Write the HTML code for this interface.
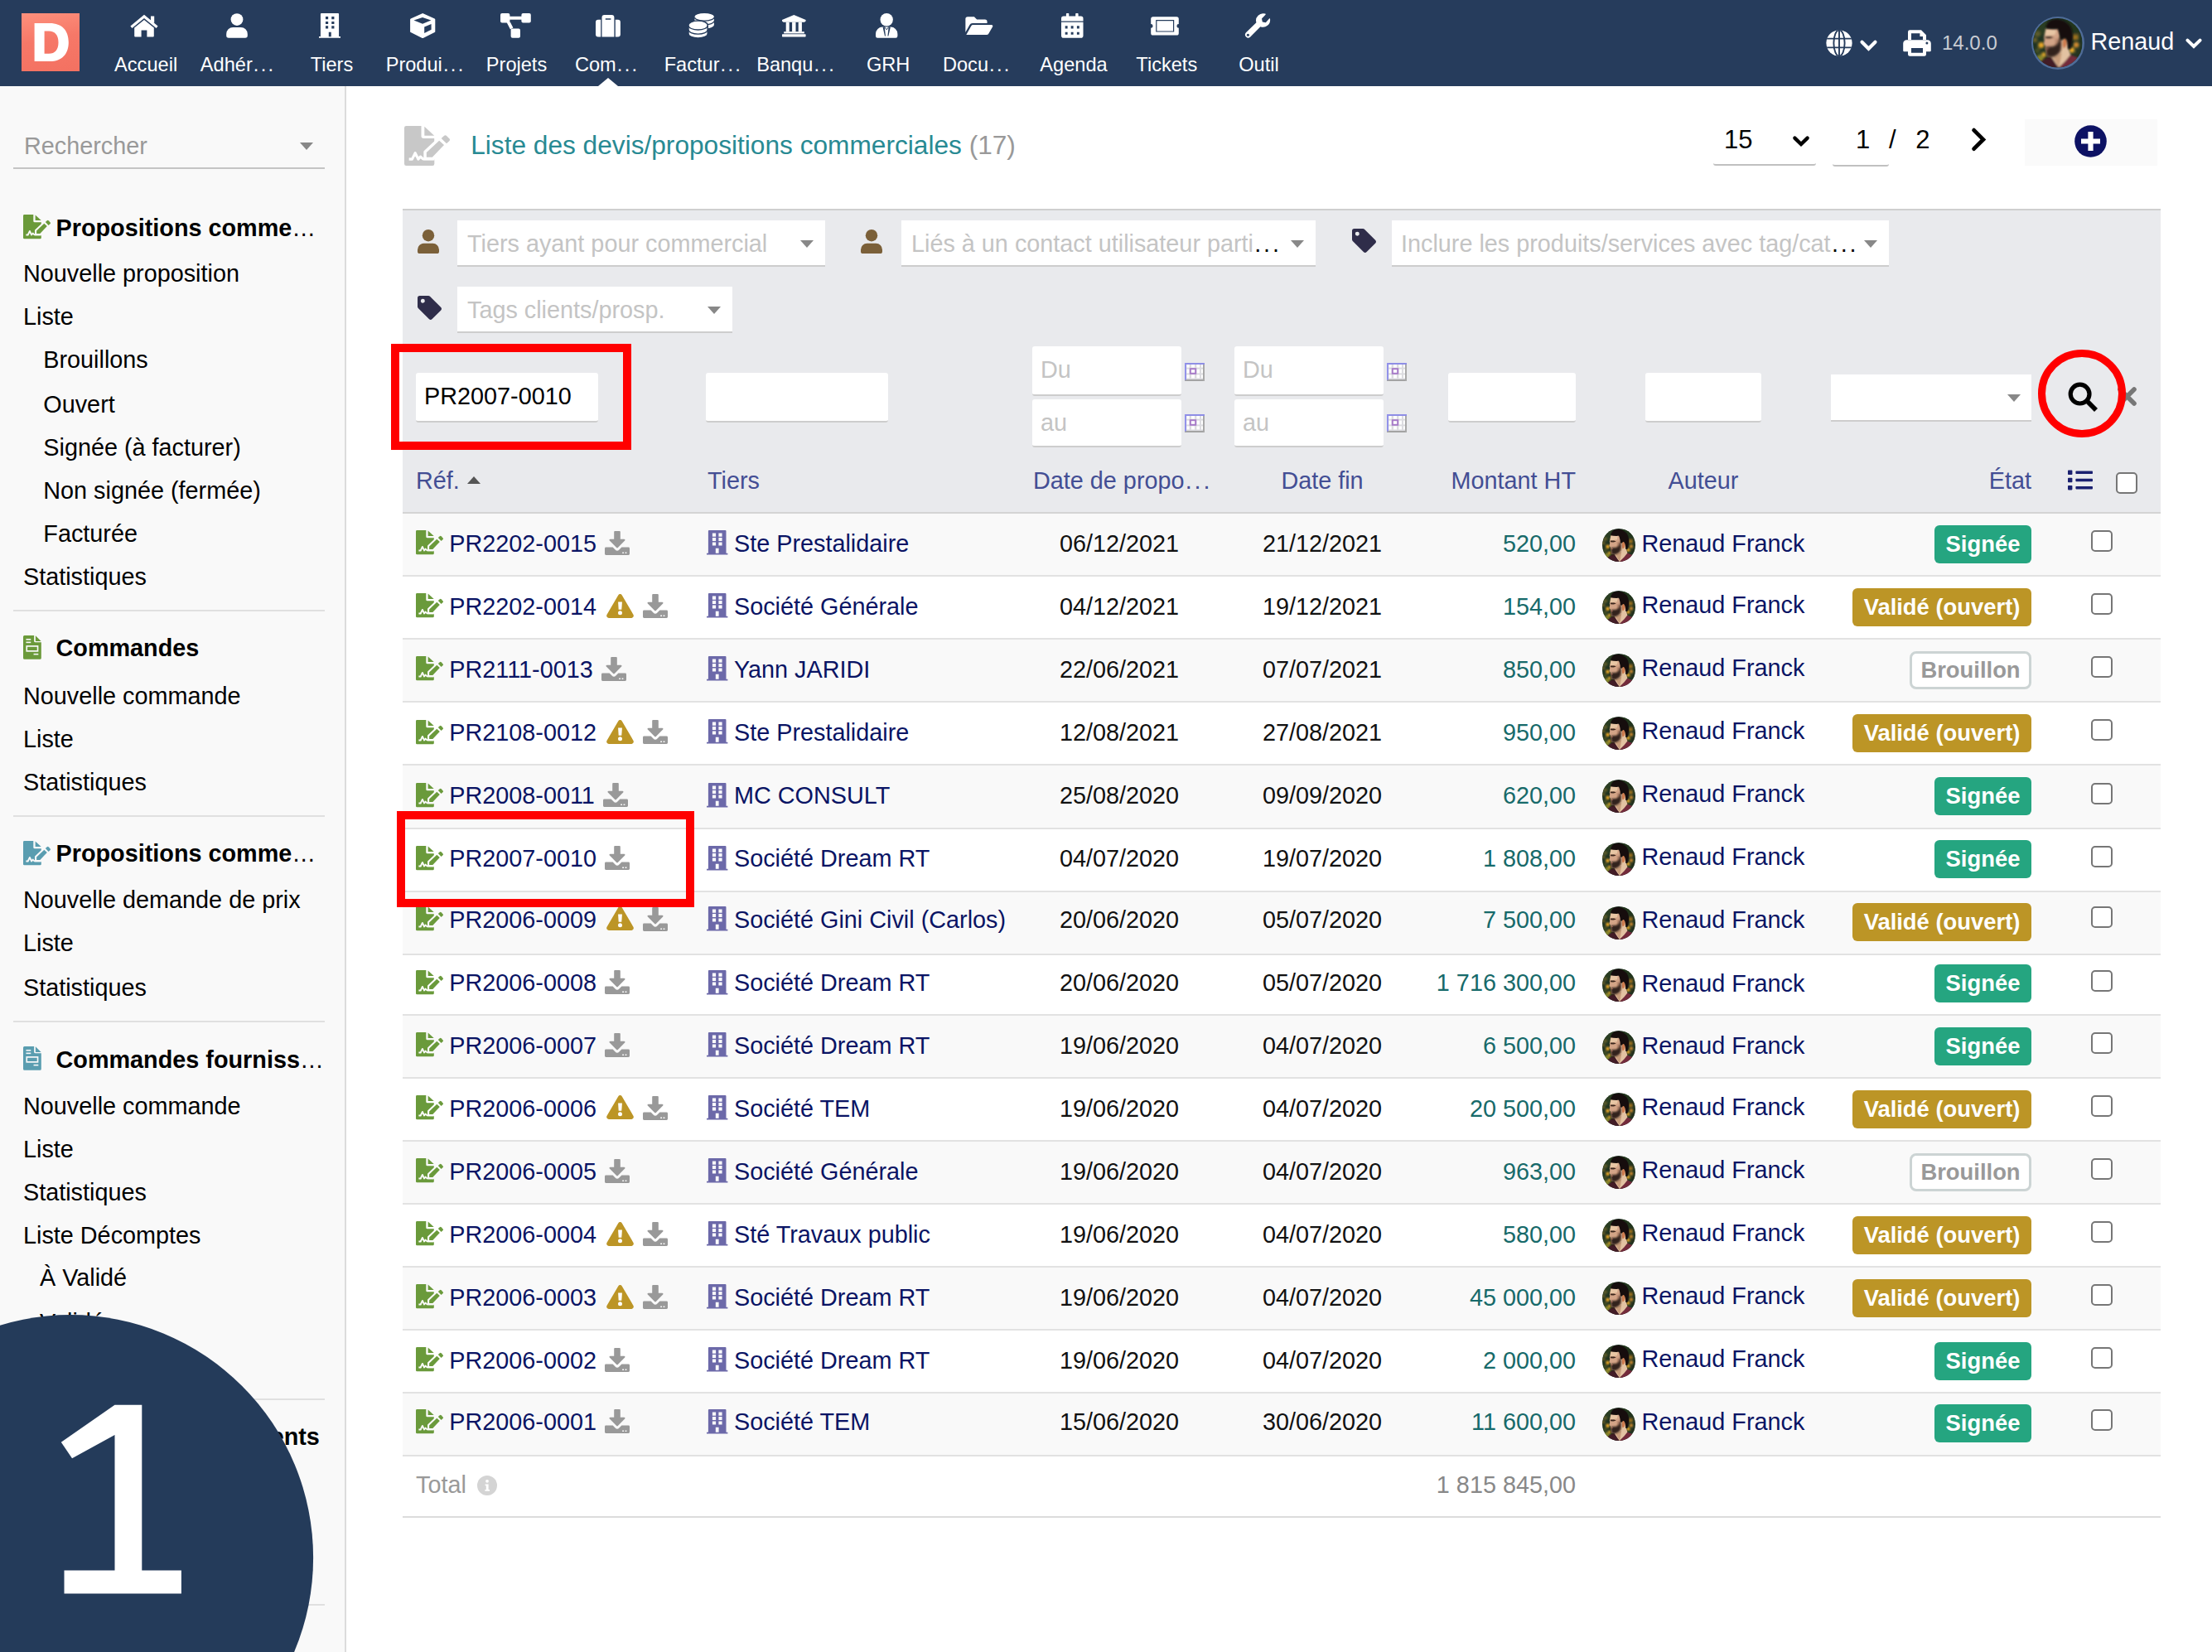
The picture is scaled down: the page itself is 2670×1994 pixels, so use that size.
<!DOCTYPE html>
<html><head><meta charset="utf-8"><title>Liste des devis</title><style>
*{box-sizing:border-box;margin:0;padding:0}
html,body{width:2670px;height:1994px;overflow:hidden;background:#fff}
body{font-family:"Liberation Sans",sans-serif;font-size:28.8px;color:#000;position:relative}
.abs{position:absolute}
svg{display:block;overflow:visible}
#top{position:absolute;left:0;top:0;width:2670px;height:104px;background:#263c5c}
#logo{position:absolute;left:26px;top:16px;width:70px;height:70px;background:linear-gradient(170deg,#fd907c 0%,#f67868 45%,#f37161 100%)}
.mi{position:absolute;top:0;width:112px;height:104px;color:#fff;font-size:23.6px;text-align:center}
.mi .ic{position:absolute;left:0;width:112px;display:flex;justify-content:center}
.mi .lb{position:absolute;left:-8.5px;width:132px;top:64.3px;line-height:28px;white-space:nowrap}
#side{position:absolute;left:0;top:104px;width:418px;height:1890px;background:#f9f9f9;border-right:2px solid #dcdcdc}
.sl{position:absolute;left:28px;white-space:nowrap;line-height:34px;height:34px}
.sl.b{font-weight:bold;left:67.5px}
.sl.s{left:52.3px}
.shr{position:absolute;left:16px;width:376px;height:2px;background:#e0e0e0}
.tb{position:absolute;background:#fff;border-bottom:2px solid #cdcdcd;border-radius:3px}
.ph{color:#c4c4c4;white-space:nowrap;position:absolute;line-height:34px}
.caret{position:absolute;width:0;height:0;border-left:8px solid transparent;border-right:8px solid transparent;border-top:9px solid #888}
table{border-collapse:collapse;position:absolute;left:486px;top:619px;width:2122px;table-layout:fixed}
td{vertical-align:middle;white-space:nowrap;padding:0;height:100%}
tr{border-bottom:2px solid #e0e0e0}
tr.o{background:#f9f9f9}
.ref{color:#0a1464}
.cell{position:relative;height:100%}
.hd{position:absolute;color:#434e94;white-space:nowrap;line-height:34px}
.badge{display:inline-block;height:46px;line-height:46px;border-radius:6px;font-weight:bold;font-size:27.4px;color:#fff;padding:0 13.6px}
.b4{background:#25a580}.b1{background:#bc9526}.b0{background:#fff;color:#999;border:3.4px solid #ccd4d4;line-height:39.2px;padding:0 10.4px;border-radius:8px}
.cb{display:inline-block;width:26px;height:26px;border:2px solid #767676;border-radius:5px;background:#fff}
</style></head><body>
<svg width="0" height="0" style="position:absolute"><defs><filter id="bl1" x="-20%" y="-20%" width="140%" height="140%"><feGaussianBlur stdDeviation="2.8"/></filter><filter id="bl2" x="-10%" y="-10%" width="120%" height="120%"><feGaussianBlur stdDeviation="1.5"/></filter><filter id="bl3" x="-20%" y="-20%" width="140%" height="140%"><feGaussianBlur stdDeviation="2.4"/></filter><clipPath id="avc"><circle cx="50" cy="50" r="50"/></clipPath><symbol id="avatar" viewBox="0 0 100 100"><g clip-path="url(#avc)"><rect width="100" height="100" fill="#1f3322"/><g filter="url(#bl1)"><rect x="0" y="0" width="32" height="34" fill="#2b3d22"/><rect x="64" y="0" width="40" height="30" fill="#22361f"/><circle cx="9" cy="32" r="6" fill="#5d5c2a"/><circle cx="4" cy="44" r="5" fill="#6a5e25"/><circle cx="16.5" cy="54.5" r="6" fill="#eaa728"/><circle cx="22" cy="74" r="5" fill="#d7a22c"/><circle cx="14" cy="82" r="8" fill="#86852c"/><circle cx="9" cy="66" r="5" fill="#4a5222"/><circle cx="78.5" cy="64.5" r="5.4" fill="#f4ae28"/><circle cx="87.5" cy="54" r="5.6" fill="#cf8a2e"/><rect x="79" y="33" width="13" height="11" fill="#9a6f1f"/><circle cx="93" cy="70" r="6" fill="#26331c"/></g><g filter="url(#bl2)"><path d="M14 89 L31 78.5 L40 78 L52 101 L10 101 Z" fill="#431a26"/><path d="M75 73.5 L90 79.5 L100 86 L100 101 L50 101 L66 85 Z" fill="#732c3b"/><path d="M38 70 L56 42 L71 42 L72 62 L76 74 L66 86 L52 100 L46 92 L37 78 Z" fill="#e3c2a2"/><path d="M40 78 L58 70 L55 88 L52 99 Z" fill="#c79c7a"/><path d="M26 20 L52 19 L56 42 L58 66 L40 78 L28 76 L25.5 62 L24.8 56 L21.3 52.3 L23 44 L22 38.6 Z" fill="#d3a487"/><path d="M26 22 L47 21 L45 33 L24 37 Z" fill="#e8c6a4"/><path d="M44 40 L54 44 L54 56 L44 58 Z" fill="#c08f74"/><path d="M24.5 36.5 L36 36.5 L42 39.5 L33 41.5 L25 40.5 Z" fill="#3b261c"/><path d="M60 44 C62 38 69 38 69.5 45 C70 52 67 60 62 61 C59 58 59 50 60 44 Z" fill="#cf7d50"/></g><g filter="url(#bl3)"><path d="M25.5 58.5 C30 57.5 35 58 40 57 C46 56 50 52 52 46 L52.5 39 L56 40 C57 52 57.5 60 55 67 C50.5 74.5 42 79.5 33 78.5 C28 77.5 26.5 74 27 70 C27.5 66 26 62 25.5 58.5 Z" fill="#33221a"/></g><g filter="url(#bl2)"><path d="M25 60.2 L32.5 59.8 L31.6 62.4 L25.6 62.8 Z" fill="#94604f"/><path d="M25.5 20.5 C26.5 11 32 4.5 40 2.5 C52 -0.5 67 4.5 75 15.5 C81 25 82 38 79 50 C78 56 77 60 75.5 62.5 L70.5 62 C70.5 54 70 46 66 41 C63 39 60 41 58.5 45 L55 43 C54.5 36 53 28 50 22 C42 23 33 22 25.5 20.5 Z" fill="#15100e"/></g></g></symbol></defs></svg>
<div id="top">
<div id="logo"><svg width="70" height="70" viewBox="0 0 70 70"><path fill="#fff" fill-rule="evenodd" d="M15.6 12 H34 C49 12 56.8 21 56.8 35 C56.8 49 49 58.1 34 58.1 H15.6 Z M27.6 21.6 V48.8 H33 C40.5 48.8 44.5 43.6 44.5 35.2 C44.5 26.8 40.5 21.6 33 21.6 Z"/></svg></div>
<div class="mi" style="left:118px"><div class="ic" style="top:17px;margin-left:0px"><svg width="34" height="28" viewBox="0 0 34 28" preserveAspectRatio="none" style=""><path fill="#fff" d="M17 0.8 L33.6 14.6 L31.6 17 L17 4.9 L2.4 17 L0.4 14.6 Z"/><rect fill="#fff" x="25" y="2.5" width="4.2" height="8"/><path fill="#fff" d="M5.2 16.6 L17 6.9 L28.8 16.6 V26.4 a1 1 0 0 1 -1 1 H20.4 V19.6 H13.6 V27.4 H6.2 a1 1 0 0 1 -1 -1 Z"/></svg></div><div class="lb" style="margin-left:0.6px">Accueil</div></div>
<div class="mi" style="left:230px"><div class="ic" style="top:16px;margin-left:0px"><svg width="26" height="30" viewBox="0 0 26 30" preserveAspectRatio="none" style=""><circle fill="#fff" cx="13" cy="7.6" r="7.4"/><path fill="#fff" d="M0.2 27 V25 a8 8 0 0 1 8 -8 H17.8 a8 8 0 0 1 8 8 V27 a2.8 2.8 0 0 1 -2.8 2.8 H3 a2.8 2.8 0 0 1 -2.8 -2.8 Z"/></svg></div><div class="lb" style="margin-left:-0.4px">Adhér<span style="letter-spacing:0.098em;margin-left:0.045em;">...</span></div></div>
<div class="mi" style="left:342px"><div class="ic" style="top:16.2px;margin-left:0px"><svg width="26" height="29.8" viewBox="0 0 25.4 29.4" preserveAspectRatio="none" style=""><path fill="#fff" fill-rule="evenodd" d="M1.9 1 a1 1 0 0 1 1 -1 H22.5 a1 1 0 0 1 1 1 V27.7 H25.4 V29.4 H0 V27.7 H1.9 Z M7.8 4.0 H10.9 V7.1 H7.8 Z M14.9 4.0 H18.0 V7.1 H14.9 Z M7.8 9.8 H10.9 V12.9 H7.8 Z M14.9 9.8 H18.0 V12.9 H14.9 Z M7.8 15.1 H10.9 V18.2 H7.8 Z M14.9 15.1 H18.0 V18.2 H14.9 Z M11.5 22.4 H14.4 V27.8 H11.5 Z "/></svg></div><div class="lb" style="margin-left:1px">Tiers</div></div>
<div class="mi" style="left:454px"><div class="ic" style="top:16px;margin-left:0px"><svg width="30.4" height="30.2" viewBox="0 0 30.4 30.2" preserveAspectRatio="none" style=""><path fill="#fff" stroke="#fff" stroke-width="2.4" stroke-linejoin="round" d="M15.2 1.3 L29.1 7.6 V22 L15.2 28.9 L1.3 22 V7.6 Z"/><path fill="#263c5c" d="M4.5 8.4 L15 5.1 L25.4 8.4 L15.1 12.8 Z"/><path fill="#263c5c" d="M17.2 16.5 L25.6 13.1 V19.7 L17.2 24 Z"/></svg></div><div class="lb" style="margin-left:2.1px">Produi<span style="letter-spacing:0.098em;margin-left:0.045em;">...</span></div></div>
<div class="mi" style="left:566px"><div class="ic" style="top:16.1px;margin-left:0px"><svg width="36.8" height="29.8" viewBox="0 0 36.8 29.8" preserveAspectRatio="none" style=""><rect fill="#fff" x="0" y="0" width="11.4" height="11.6" rx="2"/><rect fill="#fff" x="25.4" y="0" width="11.4" height="11.6" rx="2"/><rect fill="#fff" x="12.6" y="18.4" width="11.4" height="11.4" rx="2"/><rect fill="#fff" x="10" y="3.8" width="17" height="3.9"/><path fill="#fff" d="M7.6 11 L11.8 10.6 L15.4 17.4 L12 19.6 Z"/></svg></div><div class="lb" style="margin-left:0px">Projets</div></div>
<div class="mi" style="left:678px"><div class="ic" style="top:17.8px;margin-left:0px"><svg width="29.9" height="26.4" viewBox="0 0 29.9 26.4" preserveAspectRatio="none" style=""><path fill="#fff" fill-rule="evenodd" d="M7.5 3 a3 3 0 0 1 3 -3 H19.4 a3 3 0 0 1 3 3 V26.4 H7.5 Z M11.8 4.3 V5.7 H18.4 V4.3 Z"/><path fill="#fff" d="M0 8.8 a3 3 0 0 1 3 -3 H6.2 V26.4 H3 a3 3 0 0 1 -3 -3 Z"/><path fill="#fff" d="M23.8 5.8 H26.9 a3 3 0 0 1 3 3 V23.4 a3 3 0 0 1 -3 3 H23.8 Z"/></svg></div><div class="lb" style="margin-left:-2.8px">Com<span style="letter-spacing:0.098em;margin-left:0.045em;">...</span></div></div>
<div class="mi" style="left:790px"><div class="ic" style="top:16px;margin-left:0.3px"><svg width="31" height="30" viewBox="0 0 31 30" preserveAspectRatio="none" style=""><path fill="#fff" d="M7.5 4.2 a11.7 4.2 0 0 1 23.4 0 V14.2 a11.7 4.2 0 0 1 -23.4 0 Z"/><path fill="none" stroke="#263c5c" stroke-width="1.3" d="M7.5 5 a11.7 4.2 0 0 0 23.4 0 M7.5 9.6 a11.7 4.2 0 0 0 23.4 0"/><path fill="#fff" stroke="#263c5c" stroke-width="1.5" d="M0 14.1 a11.6 5.1 0 0 1 23.2 0 V24.9 a11.6 5.1 0 0 1 -23.2 0 Z"/><path fill="none" stroke="#263c5c" stroke-width="1.3" d="M0 14.9 a11.6 5.1 0 0 0 23.2 0 M0 20 a11.6 5.1 0 0 0 23.2 0"/></svg></div><div class="lb" style="margin-left:1.4px">Factur<span style="letter-spacing:0.098em;margin-left:0.045em;">...</span></div></div>
<div class="mi" style="left:902px"><div class="ic" style="top:17.8px;margin-left:0.3px"><svg width="28.6" height="26.4" viewBox="0 0 28.6 26.4" preserveAspectRatio="none" style=""><path fill="#fff" d="M14.3 0 L28.6 6 V7.6 L27 8.7 H1.6 L0 7.6 V6 Z"/><rect fill="#fff" x="4.7" y="8.7" width="4" height="11.6"/><rect fill="#fff" x="12.1" y="8.7" width="4.4" height="11.6"/><rect fill="#fff" x="19.7" y="8.7" width="4.2" height="11.6"/><rect fill="#fff" x="2.2" y="20.2" width="24.6" height="2.2"/><rect fill="#fff" x="0" y="23.2" width="28.6" height="3.2" rx="0.6"/></svg></div><div class="lb" style="margin-left:1.6px">Banqu<span style="letter-spacing:0.098em;margin-left:0.045em;">...</span></div></div>
<div class="mi" style="left:1014px"><div class="ic" style="top:16.2px;margin-left:0.2px"><svg width="26.4" height="29.8" viewBox="0 0 26.4 29.8" preserveAspectRatio="none" style=""><circle fill="#fff" cx="13.2" cy="7.7" r="7.7"/><path fill="#fff" d="M0 27.6 V25 a8.4 8.4 0 0 1 8.4 -8.4 H18 a8.4 8.4 0 0 1 8.4 8.4 V27.6 a2.2 2.2 0 0 1 -2.2 2.2 H2.2 a2.2 2.2 0 0 1 -2.2 -2.2 Z"/><path fill="#263c5c" d="M8.5 16.5 L10.7 16.5 L12 27.6 L11 27.6 Z M17.9 16.5 L15.7 16.5 L14.4 27.6 L15.4 27.6 Z"/><path fill="none" stroke="#263c5c" stroke-width="1" stroke-linejoin="round" d="M10.6 16.6 L13.2 19.8 L15.8 16.6"/></svg></div><div class="lb" style="margin-left:0.6px">GRH</div></div>
<div class="mi" style="left:1126px"><div class="ic" style="top:20px;margin-left:0.3px"><svg width="33.9" height="22.3" viewBox="0 0 36 24" preserveAspectRatio="none" style=""><path fill="#fff" d="M0.4 3 a2.8 2.8 0 0 1 2.8 -2.8 H11.6 L15 3.8 H25.4 a2.8 2.8 0 0 1 2.8 2.8 V8.6 H9.4 a4 4 0 0 0 -3.6 2.2 L0.4 20.4 Z"/><path fill="#fff" d="M7.8 12 a2.6 2.6 0 0 1 2.2 -1.2 H33.8 a1.6 1.6 0 0 1 1.4 2.4 L30 22.4 a2.8 2.8 0 0 1 -2.4 1.4 H1.4 Z"/></svg></div><div class="lb" style="margin-left:-4.2px">Docu<span style="letter-spacing:0.098em;margin-left:0.045em;">...</span></div></div>
<div class="mi" style="left:1238px"><div class="ic" style="top:16.2px;margin-left:0.1px"><svg width="26.5" height="29.8" viewBox="0 0 26.5 29.8" preserveAspectRatio="none" style=""><path fill="#fff" fill-rule="evenodd" d="M0 10.8 H26.5 V27 a2.8 2.8 0 0 1 -2.8 2.8 H2.8 a2.8 2.8 0 0 1 -2.8 -2.8 Z M4.7 15.2 H7.6 V18.4 H4.7 Z M11.7 15.2 H14.6 V18.4 H11.7 Z M18.9 15.2 H21.8 V18.4 H18.9 Z M4.7 22.7 H7.6 V25.8 H4.7 Z M11.7 22.7 H14.6 V25.8 H11.7 Z M18.9 22.7 H21.8 V25.8 H18.9 Z "/><path fill="#fff" d="M0 9.5 V6.4 a2.8 2.8 0 0 1 2.8 -2.8 H23.7 a2.8 2.8 0 0 1 2.8 2.8 V9.5 Z"/><rect fill="#fff" x="5.9" y="0" width="3.4" height="6" rx="0.8"/><rect fill="#fff" x="17.2" y="0" width="3.4" height="6" rx="0.8"/></svg></div><div class="lb" style="margin-left:0.5px">Agenda</div></div>
<div class="mi" style="left:1350px"><div class="ic" style="top:20px;margin-left:0px"><svg width="34" height="23" viewBox="0 0 34 23" preserveAspectRatio="none" style=""><path fill="#fff" fill-rule="evenodd" d="M0.2 2.8 a2.6 2.6 0 0 1 2.6 -2.6 H31.2 a2.6 2.6 0 0 1 2.6 2.6 V9 a2.4 2.4 0 0 0 0 4.8 V20 a2.6 2.6 0 0 1 -2.6 2.6 H2.8 a2.6 2.6 0 0 1 -2.6 -2.6 V13.8 a2.4 2.4 0 0 0 0 -4.8 Z M6.2 4 V18.6 H28.2 V4 Z M7.4 5.2 H27 V17.4 H7.4 Z"/></svg></div><div class="lb" style="margin-left:0.8px">Tickets</div></div>
<div class="mi" style="left:1462px"><div class="ic" style="top:16px;margin-left:0px"><svg width="32" height="31" viewBox="0 0 32 31" preserveAspectRatio="none" style=""><path fill="#fff" d="M31 6.8 a8.6 8.6 0 0 1 -11.6 9.4 L7 28.8 a3.7 3.7 0 0 1 -5.2 -5.2 L14.4 11.2 A8.6 8.6 0 0 1 25.2 0.6 c0.6 0.2 0.7 0.8 0.3 1.2 L21 6.4 L21.8 10.4 L25.8 11.2 L30 6.6 c0.4 -0.4 0.9 -0.3 1 0.2 Z"/><circle fill="#263c5c" cx="4.4" cy="26.2" r="1.5"/></svg></div><div class="lb" style="margin-left:0px">Outil</div></div>
<div class="abs" style="left:722px;top:94px;width:0;height:0;border-left:12px solid transparent;border-right:12px solid transparent;border-bottom:10px solid #fff"></div>
<div class="abs" style="left:2204px;top:36px"><svg width="32" height="32" viewBox="0 0 32 32" preserveAspectRatio="none" style=""><defs><clipPath id="gcl"><circle cx="16" cy="16" r="15.8"/></clipPath></defs><g clip-path="url(#gcl)"><circle fill="#fff" cx="16" cy="16" r="15.8"/><g fill="none" stroke="#263c5c" stroke-width="1.9"><ellipse cx="16" cy="16" rx="6.6" ry="15.8"/><path d="M0 10.6 H32 M0 21.4 H32 M16 0 V32"/></g></g></svg></div>
<div class="abs" style="left:2245px;top:48px"><svg width="21" height="14" viewBox="0 0 20 13" preserveAspectRatio="none" style=""><path fill="none" stroke="#fff" stroke-width="4" stroke-linecap="round" stroke-linejoin="miter" d="M2.4 2.6 L10 10 L17.6 2.6"/></svg></div>
<div class="abs" style="left:2297px;top:36px"><svg width="34" height="32" viewBox="0 0 34 32" preserveAspectRatio="none" style=""><path fill="#fff" fill-rule="evenodd" d="M6 2.4 a2.2 2.2 0 0 1 2.2 -2.2 H22 L28 6.2 V12 H24 V8 H20.4 V4.2 H10 V12 H6 Z"/><path fill="#fff" fill-rule="evenodd" d="M0.2 16.4 a4.2 4.2 0 0 1 4.2 -4.2 H29.6 a4.2 4.2 0 0 1 4.2 4.2 V25 a1.2 1.2 0 0 1 -1.2 1.2 H28 V29.6 a2.2 2.2 0 0 1 -2.2 2.2 H8.2 a2.2 2.2 0 0 1 -2.2 -2.2 V26.2 H1.4 a1.2 1.2 0 0 1 -1.2 -1.2 Z M10 22 V27.8 H24 V22 Z M27.4 16 a1.5 1.5 0 1 0 3 0 a1.5 1.5 0 1 0 -3 0 Z"/></svg></div>
<div class="abs" style="left:2344px;top:37px;font-size:24px;line-height:30px;color:#c9ccd2">14.0.0</div>
<div class="abs" style="left:2452px;top:20px;width:64px;height:64px;border-radius:50%;background:#4f6c98;padding:2.2px"><svg width="59.6" height="59.6" viewBox="0 0 100 100" style="display:block"><use href="#avatar"/></svg></div>
<div class="abs" style="left:2523.5px;top:33.3px;font-size:28.8px;line-height:34px;color:#fff">Renaud</div>
<div class="abs" style="left:2638px;top:46px"><svg width="20" height="13" viewBox="0 0 20 13" preserveAspectRatio="none" style=""><path fill="none" stroke="#fff" stroke-width="4" stroke-linecap="round" stroke-linejoin="miter" d="M2.4 2.6 L10 10 L17.6 2.6"/></svg></div>
</div>
<div id="side">
<div class="abs" style="left:29px;top:55px;color:#999;line-height:34px">Rechercher</div>
<div class="caret" style="left:362px;top:68px"></div>
<div class="abs" style="left:16px;top:98px;width:376px;height:2px;background:#c4c4c4"></div>
<div class="sl b" style="top:153.5px">Propositions comme<span style="font-weight:normal">…</span></div>
<div class="sl" style="top:209.0px">Nouvelle proposition</div>
<div class="sl" style="top:261.3px">Liste</div>
<div class="sl s" style="top:312.6px">Brouillons</div>
<div class="sl s" style="top:366.5px">Ouvert</div>
<div class="sl s" style="top:418.7px">Signée (à facturer)</div>
<div class="sl s" style="top:471.0px">Non signée (fermée)</div>
<div class="sl s" style="top:522.8px">Facturée</div>
<div class="sl" style="top:575.1px">Statistiques</div>
<div class="sl b" style="top:660.9px">Commandes</div>
<div class="sl" style="top:719.0px">Nouvelle commande</div>
<div class="sl" style="top:771.3px">Liste</div>
<div class="sl" style="top:823.2px">Statistiques</div>
<div class="sl b" style="top:908.8px">Propositions comme<span style="font-weight:normal">…</span></div>
<div class="sl" style="top:965.2px">Nouvelle demande de prix</div>
<div class="sl" style="top:1016.9px">Liste</div>
<div class="sl" style="top:1070.8px">Statistiques</div>
<div class="sl b" style="top:1157.7px">Commandes fourniss<span style="font-weight:normal">…</span></div>
<div class="sl" style="top:1213.7px">Nouvelle commande</div>
<div class="sl" style="top:1266.0px">Liste</div>
<div class="sl" style="top:1318.3px">Statistiques</div>
<div class="sl" style="top:1369.5px">Liste Décomptes</div>
<div class="sl" style="left:48px;top:1421.2px">À Validé</div>
<div class="sl" style="left:48px;top:1475.3px">Validé</div>
<div class="sl b" style="top:1613.0px">Contrats/Abonnements</div>
<div class="shr" style="top:632px"></div>
<div class="shr" style="top:880px"></div>
<div class="shr" style="top:1127.5px"></div>
<div class="shr" style="top:1584px"></div>
<div class="shr" style="top:1831.9px"></div>
<div class="abs" style="left:28px;top:154.7px"><svg width="33" height="29.3" viewBox="0 0 33 29.3" preserveAspectRatio="none" style=""><path fill="#6b9a3a" d="M0 1.4 A1.4 1.4 0 0 1 1.4 0 H12.3 V7.7 a1.5 1.5 0 0 0 1.5 1.5 H21.8 V27.9 a1.4 1.4 0 0 1 -1.4 1.4 H1.4 A1.4 1.4 0 0 1 0 27.9 Z"/><path fill="#6b9a3a" d="M14.6 0.4 L21.7 7.1 H14.6 Z"/><path fill="#f9f9f9" stroke="#f9f9f9" stroke-width="4.2" stroke-linejoin="miter" d="M16.1 19.6 L25.3 10.8 L28.8 14.1 L20.3 23.1 H16.1 Z"/><path fill="#f9f9f9" d="M22 9 H34 V24 H22 Z"/><path fill="#6b9a3a" d="M16.1 19.6 L25.3 10.8 L28.8 14.1 L20.3 23.1 H16.1 Z"/><path fill="#6b9a3a" d="M26.8 9.1 L28.9 7.2 a1.2 1.2 0 0 1 1.6 0 L32.7 9.4 a1.2 1.2 0 0 1 0 1.6 L30.6 13 Z"/><path fill="none" stroke="#f9f9f9" stroke-width="1.9" stroke-linejoin="round" stroke-linecap="butt" d="M3.4 24.5 H5.7 L7.9 19.9 L10.1 24.5 L11.7 22.6 L13.6 24.4 H21.9"/></svg></div>
<div class="abs" style="left:28px;top:662.7px"><svg width="22.2" height="28.8" viewBox="0 0 23 29" preserveAspectRatio="none" style=""><path fill="#6b9a3a" d="M0 1.6 A1.6 1.6 0 0 1 1.6 0 H13.6 V6.8 a1.6 1.6 0 0 0 1.6 1.6 H22.6 V27.4 a1.6 1.6 0 0 1 -1.6 1.6 H1.6 A1.6 1.6 0 0 1 0 27.4 Z"/><path fill="#6b9a3a" d="M15.4 0.2 L22.4 7 H15.4 Z"/><g fill="#f9f9f9"><rect x="3.6" y="4" width="6" height="1.6"/><rect x="3.6" y="7.6" width="6" height="1.6"/><rect x="13" y="22" width="6" height="1.6"/></g><rect x="4.4" y="13" width="13.8" height="6" fill="none" stroke="#f9f9f9" stroke-width="1.7"/></svg></div>
<div class="abs" style="left:28px;top:911.0px"><svg width="33" height="29.3" viewBox="0 0 33 29.3" preserveAspectRatio="none" style=""><path fill="#5a9db0" d="M0 1.4 A1.4 1.4 0 0 1 1.4 0 H12.3 V7.7 a1.5 1.5 0 0 0 1.5 1.5 H21.8 V27.9 a1.4 1.4 0 0 1 -1.4 1.4 H1.4 A1.4 1.4 0 0 1 0 27.9 Z"/><path fill="#5a9db0" d="M14.6 0.4 L21.7 7.1 H14.6 Z"/><path fill="#f9f9f9" stroke="#f9f9f9" stroke-width="4.2" stroke-linejoin="miter" d="M16.1 19.6 L25.3 10.8 L28.8 14.1 L20.3 23.1 H16.1 Z"/><path fill="#f9f9f9" d="M22 9 H34 V24 H22 Z"/><path fill="#5a9db0" d="M16.1 19.6 L25.3 10.8 L28.8 14.1 L20.3 23.1 H16.1 Z"/><path fill="#5a9db0" d="M26.8 9.1 L28.9 7.2 a1.2 1.2 0 0 1 1.6 0 L32.7 9.4 a1.2 1.2 0 0 1 0 1.6 L30.6 13 Z"/><path fill="none" stroke="#f9f9f9" stroke-width="1.9" stroke-linejoin="round" stroke-linecap="butt" d="M3.4 24.5 H5.7 L7.9 19.9 L10.1 24.5 L11.7 22.6 L13.6 24.4 H21.9"/></svg></div>
<div class="abs" style="left:28px;top:1159.0px"><svg width="22.2" height="28.8" viewBox="0 0 23 29" preserveAspectRatio="none" style=""><path fill="#5a9db0" d="M0 1.6 A1.6 1.6 0 0 1 1.6 0 H13.6 V6.8 a1.6 1.6 0 0 0 1.6 1.6 H22.6 V27.4 a1.6 1.6 0 0 1 -1.6 1.6 H1.6 A1.6 1.6 0 0 1 0 27.4 Z"/><path fill="#5a9db0" d="M15.4 0.2 L22.4 7 H15.4 Z"/><g fill="#f9f9f9"><rect x="3.6" y="4" width="6" height="1.6"/><rect x="3.6" y="7.6" width="6" height="1.6"/><rect x="13" y="22" width="6" height="1.6"/></g><rect x="4.4" y="13" width="13.8" height="6" fill="none" stroke="#f9f9f9" stroke-width="1.7"/></svg></div>
</div>
<div class="abs" style="left:488px;top:152px"><svg width="55" height="48" viewBox="0 0 33 29.3" preserveAspectRatio="none" style=""><path fill="#c8c8c8" d="M0 1.4 A1.4 1.4 0 0 1 1.4 0 H12.3 V7.7 a1.5 1.5 0 0 0 1.5 1.5 H21.8 V27.9 a1.4 1.4 0 0 1 -1.4 1.4 H1.4 A1.4 1.4 0 0 1 0 27.9 Z"/><path fill="#c8c8c8" d="M14.6 0.4 L21.7 7.1 H14.6 Z"/><path fill="#fff" stroke="#fff" stroke-width="4.2" stroke-linejoin="miter" d="M16.1 19.6 L25.3 10.8 L28.8 14.1 L20.3 23.1 H16.1 Z"/><path fill="#fff" d="M22 9 H34 V24 H22 Z"/><path fill="#c8c8c8" d="M16.1 19.6 L25.3 10.8 L28.8 14.1 L20.3 23.1 H16.1 Z"/><path fill="#c8c8c8" d="M26.8 9.1 L28.9 7.2 a1.2 1.2 0 0 1 1.6 0 L32.7 9.4 a1.2 1.2 0 0 1 0 1.6 L30.6 13 Z"/><path fill="none" stroke="#fff" stroke-width="1.9" stroke-linejoin="round" stroke-linecap="butt" d="M3.4 24.5 H5.7 L7.9 19.9 L10.1 24.5 L11.7 22.6 L13.6 24.4 H21.9"/></svg></div>
<div class="abs" style="left:568.2px;top:152.8px;font-size:31.65px;line-height:44px;color:#288a93;white-space:nowrap">Liste des devis/propositions commerciales <span style="color:#999">(17)</span></div>
<div class="tb" style="left:2068px;top:142px;width:124px;height:58px;border-bottom-color:#c0c0c0"></div>
<div class="abs" style="left:2081px;top:150px;font-size:31px;line-height:38px">15</div>
<div class="abs" style="left:2164px;top:164px"><svg width="20" height="13" viewBox="0 0 20 13" preserveAspectRatio="none" style=""><path fill="none" stroke="#000" stroke-width="4.4" stroke-linecap="round" stroke-linejoin="miter" d="M2.4 2.6 L10 10 L17.6 2.6"/></svg></div>
<div class="tb" style="left:2212px;top:142px;width:68px;height:59.4px;border-bottom-color:#c0c0c0"></div>
<div class="abs" style="left:2240px;top:150px;font-size:31px;line-height:38px">1</div>
<div class="abs" style="left:2280px;top:150px;font-size:31px;line-height:38px">/</div>
<div class="abs" style="left:2312.3px;top:150px;font-size:31px;line-height:38px">2</div>
<svg class="abs" style="left:2378.6px;top:153.6px" width="19.8" height="28.8" viewBox="0 0 22 32"><path d="M4 3.5 L16.5 16 L4 28.5" fill="none" stroke="#000" stroke-width="5.4" stroke-linecap="round" stroke-linejoin="miter"/></svg>
<div class="abs" style="left:2444px;top:144px;width:160px;height:56px;background:#fafafa"></div>
<div class="abs" style="left:2504.2px;top:151.3px"><svg width="39" height="39" viewBox="0 0 39 39" preserveAspectRatio="none" style=""><circle cx="19.5" cy="19.5" r="19.3" fill="#0d1264"/><path fill="#fff" d="M16.4 8 H22.6 V16.4 H31 V22.6 H22.6 V31 H16.4 V22.6 H8 V16.4 H16.4 Z"/></svg></div>
<div class="abs" style="left:486px;top:252px;width:2122px;height:368px;background:#e9eaed;border-top:2px solid #cfcfcf;border-bottom:2px solid #d4d4d4"></div>
<div class="abs" style="left:504px;top:277px"><svg width="26" height="29" viewBox="0 0 26 29" preserveAspectRatio="none" style=""><circle fill="#7b6039" cx="13" cy="7.2" r="7.2"/><path fill="#7b6039" d="M0 26.4 V24.4 a7.6 7.6 0 0 1 7.6 -7.6 H18.4 a7.6 7.6 0 0 1 7.6 7.6 V26.4 a2.6 2.6 0 0 1 -2.6 2.6 H2.6 a2.6 2.6 0 0 1 -2.6 -2.6 Z"/></svg></div>
<div class="tb" style="left:552px;top:266px;width:444px;height:55.5px;border-radius:0"></div><div class="ph" style="left:564px;top:277px">Tiers ayant pour commercial</div><div class="caret" style="left:966px;top:290px"></div>
<div class="abs" style="left:1039px;top:277px"><svg width="26" height="29" viewBox="0 0 26 29" preserveAspectRatio="none" style=""><circle fill="#7b6039" cx="13" cy="7.2" r="7.2"/><path fill="#7b6039" d="M0 26.4 V24.4 a7.6 7.6 0 0 1 7.6 -7.6 H18.4 a7.6 7.6 0 0 1 7.6 7.6 V26.4 a2.6 2.6 0 0 1 -2.6 2.6 H2.6 a2.6 2.6 0 0 1 -2.6 -2.6 Z"/></svg></div>
<div class="tb" style="left:1088px;top:266px;width:500px;height:55.5px;border-radius:0"></div><div class="ph" style="left:1100px;top:277px">Liés à un contact utilisateur parti<span style="letter-spacing:0.098em;margin-left:0.045em;color:#000;">...</span></div><div class="caret" style="left:1558px;top:290px"></div>
<div class="abs" style="left:1632px;top:276px"><svg width="28.8" height="28.8" viewBox="0 0 30 30" preserveAspectRatio="none" style=""><path fill="#2f2d4a" fill-rule="evenodd" d="M0 2.8 A2.8 2.8 0 0 1 2.8 0 H13.6 a2.8 2.8 0 0 1 2 0.8 L29.2 14.4 a2.8 2.8 0 0 1 0 4 L18.4 29.2 a2.8 2.8 0 0 1 -4 0 L0.8 15.6 a2.8 2.8 0 0 1 -0.8 -2 Z M4 6.6 a2.6 2.6 0 1 0 5.2 0 a2.6 2.6 0 1 0 -5.2 0 Z"/></svg></div>
<div class="tb" style="left:1680px;top:266px;width:600px;height:55.5px;border-radius:0"></div><div class="ph" style="left:1691px;top:277px">Inclure les produits/services avec tag/cat<span style="letter-spacing:0.098em;margin-left:0.045em;color:#000;">...</span></div><div class="caret" style="left:2250px;top:290px"></div>
<div class="abs" style="left:504px;top:357px"><svg width="28.8" height="28.8" viewBox="0 0 30 30" preserveAspectRatio="none" style=""><path fill="#2f2d4a" fill-rule="evenodd" d="M0 2.8 A2.8 2.8 0 0 1 2.8 0 H13.6 a2.8 2.8 0 0 1 2 0.8 L29.2 14.4 a2.8 2.8 0 0 1 0 4 L18.4 29.2 a2.8 2.8 0 0 1 -4 0 L0.8 15.6 a2.8 2.8 0 0 1 -0.8 -2 Z M4 6.6 a2.6 2.6 0 1 0 5.2 0 a2.6 2.6 0 1 0 -5.2 0 Z"/></svg></div>
<div class="tb" style="left:552px;top:346px;width:332px;height:55.5px;border-radius:0"></div><div class="ph" style="left:564px;top:357px">Tags clients/prosp.</div><div class="caret" style="left:854px;top:370px"></div>
<div class="tb" style="left:502px;top:450px;width:220px;height:59.8px"></div><div class="abs" style="left:512px;top:460.8px;line-height:34px">PR2007-0010</div>
<div class="tb" style="left:852px;top:450px;width:220px;height:59.8px"></div>
<div class="tb" style="left:1246px;top:418px;width:180px;height:59.8px"></div><div class="ph" style="left:1256px;top:429px">Du</div>
<div class="tb" style="left:1246px;top:482px;width:180px;height:57.8px"></div><div class="ph" style="left:1256px;top:493px">au</div>
<div class="abs" style="left:1430px;top:437.9px"><svg width="24" height="22" viewBox="0 0 24 22" preserveAspectRatio="none" style=""><rect x="0" y="0" width="24" height="22" fill="#dcdce0"/><rect x="2.4" y="2" width="3.2" height="3.6" fill="#fff"/><rect x="8" y="2" width="4.0" height="3.6" fill="#fff"/><rect x="14.4" y="2" width="3.6" height="3.6" fill="#fff"/><rect x="20" y="2" width="2.0" height="3.6" fill="#fff"/><rect x="2.4" y="7.6" width="3.2" height="4.8" fill="#fff"/><rect x="8" y="7.6" width="4.0" height="4.8" fill="#fff"/><rect x="14.4" y="7.6" width="3.6" height="4.8" fill="#fff"/><rect x="20" y="7.6" width="2.0" height="4.8" fill="#fff"/><rect x="2.4" y="14.4" width="3.2" height="4.0" fill="#fff"/><rect x="8" y="14.4" width="4.0" height="4.0" fill="#fff"/><rect x="14.4" y="14.4" width="3.6" height="4.0" fill="#fff"/><rect x="20" y="14.4" width="2.0" height="4.0" fill="#fff"/><rect x="0" y="20" width="24" height="2" fill="#a3a3a3"/><rect x="22" y="0" width="2" height="22" fill="#a9a9a9"/><rect x="0" y="0" width="24" height="2" fill="#8e8ee6"/><rect x="0" y="0" width="2" height="20.6" fill="#9292ea"/><rect x="6.8" y="7.2" width="6.4" height="5.6" fill="#fff" stroke="#a77bc8" stroke-width="2"/></svg></div><div class="abs" style="left:1430px;top:500px"><svg width="24" height="22" viewBox="0 0 24 22" preserveAspectRatio="none" style=""><rect x="0" y="0" width="24" height="22" fill="#dcdce0"/><rect x="2.4" y="2" width="3.2" height="3.6" fill="#fff"/><rect x="8" y="2" width="4.0" height="3.6" fill="#fff"/><rect x="14.4" y="2" width="3.6" height="3.6" fill="#fff"/><rect x="20" y="2" width="2.0" height="3.6" fill="#fff"/><rect x="2.4" y="7.6" width="3.2" height="4.8" fill="#fff"/><rect x="8" y="7.6" width="4.0" height="4.8" fill="#fff"/><rect x="14.4" y="7.6" width="3.6" height="4.8" fill="#fff"/><rect x="20" y="7.6" width="2.0" height="4.8" fill="#fff"/><rect x="2.4" y="14.4" width="3.2" height="4.0" fill="#fff"/><rect x="8" y="14.4" width="4.0" height="4.0" fill="#fff"/><rect x="14.4" y="14.4" width="3.6" height="4.0" fill="#fff"/><rect x="20" y="14.4" width="2.0" height="4.0" fill="#fff"/><rect x="0" y="20" width="24" height="2" fill="#a3a3a3"/><rect x="22" y="0" width="2" height="22" fill="#a9a9a9"/><rect x="0" y="0" width="24" height="2" fill="#8e8ee6"/><rect x="0" y="0" width="2" height="20.6" fill="#9292ea"/><rect x="6.8" y="7.2" width="6.4" height="5.6" fill="#fff" stroke="#a77bc8" stroke-width="2"/></svg></div>
<div class="tb" style="left:1490px;top:418px;width:180px;height:59.8px"></div><div class="ph" style="left:1500px;top:429px">Du</div>
<div class="tb" style="left:1490px;top:482px;width:180px;height:57.8px"></div><div class="ph" style="left:1500px;top:493px">au</div>
<div class="abs" style="left:1674px;top:437.9px"><svg width="24" height="22" viewBox="0 0 24 22" preserveAspectRatio="none" style=""><rect x="0" y="0" width="24" height="22" fill="#dcdce0"/><rect x="2.4" y="2" width="3.2" height="3.6" fill="#fff"/><rect x="8" y="2" width="4.0" height="3.6" fill="#fff"/><rect x="14.4" y="2" width="3.6" height="3.6" fill="#fff"/><rect x="20" y="2" width="2.0" height="3.6" fill="#fff"/><rect x="2.4" y="7.6" width="3.2" height="4.8" fill="#fff"/><rect x="8" y="7.6" width="4.0" height="4.8" fill="#fff"/><rect x="14.4" y="7.6" width="3.6" height="4.8" fill="#fff"/><rect x="20" y="7.6" width="2.0" height="4.8" fill="#fff"/><rect x="2.4" y="14.4" width="3.2" height="4.0" fill="#fff"/><rect x="8" y="14.4" width="4.0" height="4.0" fill="#fff"/><rect x="14.4" y="14.4" width="3.6" height="4.0" fill="#fff"/><rect x="20" y="14.4" width="2.0" height="4.0" fill="#fff"/><rect x="0" y="20" width="24" height="2" fill="#a3a3a3"/><rect x="22" y="0" width="2" height="22" fill="#a9a9a9"/><rect x="0" y="0" width="24" height="2" fill="#8e8ee6"/><rect x="0" y="0" width="2" height="20.6" fill="#9292ea"/><rect x="6.8" y="7.2" width="6.4" height="5.6" fill="#fff" stroke="#a77bc8" stroke-width="2"/></svg></div><div class="abs" style="left:1674px;top:500px"><svg width="24" height="22" viewBox="0 0 24 22" preserveAspectRatio="none" style=""><rect x="0" y="0" width="24" height="22" fill="#dcdce0"/><rect x="2.4" y="2" width="3.2" height="3.6" fill="#fff"/><rect x="8" y="2" width="4.0" height="3.6" fill="#fff"/><rect x="14.4" y="2" width="3.6" height="3.6" fill="#fff"/><rect x="20" y="2" width="2.0" height="3.6" fill="#fff"/><rect x="2.4" y="7.6" width="3.2" height="4.8" fill="#fff"/><rect x="8" y="7.6" width="4.0" height="4.8" fill="#fff"/><rect x="14.4" y="7.6" width="3.6" height="4.8" fill="#fff"/><rect x="20" y="7.6" width="2.0" height="4.8" fill="#fff"/><rect x="2.4" y="14.4" width="3.2" height="4.0" fill="#fff"/><rect x="8" y="14.4" width="4.0" height="4.0" fill="#fff"/><rect x="14.4" y="14.4" width="3.6" height="4.0" fill="#fff"/><rect x="20" y="14.4" width="2.0" height="4.0" fill="#fff"/><rect x="0" y="20" width="24" height="2" fill="#a3a3a3"/><rect x="22" y="0" width="2" height="22" fill="#a9a9a9"/><rect x="0" y="0" width="24" height="2" fill="#8e8ee6"/><rect x="0" y="0" width="2" height="20.6" fill="#9292ea"/><rect x="6.8" y="7.2" width="6.4" height="5.6" fill="#fff" stroke="#a77bc8" stroke-width="2"/></svg></div>
<div class="tb" style="left:1748px;top:450px;width:154px;height:59.8px"></div>
<div class="tb" style="left:1986px;top:450px;width:140px;height:59.8px"></div>
<div class="tb" style="left:2210px;top:452px;width:242px;height:56.5px;border-radius:0"></div><div class="caret" style="left:2423px;top:476px"></div>
<div class="abs" style="left:2496px;top:461px"><svg width="36" height="36" viewBox="0 0 36 36" preserveAspectRatio="none" style=""><circle cx="14.6" cy="14.6" r="11.4" fill="none" stroke="#000" stroke-width="5.2"/><path d="M22.6 22.6 L34 34" stroke="#000" stroke-width="5.6" stroke-linecap="butt"/></svg></div>
<div class="abs" style="left:2555.6px;top:467.4px"><svg width="23" height="23" viewBox="0 0 23 23" preserveAspectRatio="none" style=""><path d="M3 3 L20 20 M20 3 L3 20" stroke="#777" stroke-width="5.6" stroke-linecap="round"/></svg></div>
<div class="hd" style="left:502px;top:562.5px">Réf.</div>
<div class="abs" style="left:564px;top:575px;width:0;height:0;border-left:8.5px solid transparent;border-right:8.5px solid transparent;border-bottom:9px solid #555"></div>
<div class="hd" style="left:854px;top:562.5px">Tiers</div>
<div class="hd" style="left:1247px;top:562.5px">Date de propo<span style="letter-spacing:0.098em;margin-left:0.045em;">...</span></div>
<div class="hd" style="left:1496px;width:200px;text-align:center;top:562.5px">Date fin</div>
<div class="hd" style="left:1602px;width:300px;text-align:right;top:562.5px">Montant HT</div>
<div class="hd" style="left:1956px;width:200px;text-align:center;top:562.5px">Auteur</div>
<div class="hd" style="left:2152px;width:300px;text-align:right;top:562.5px">État</div>
<div class="abs" style="left:2496px;top:567px"><svg width="30" height="25" viewBox="0 0 30 25" preserveAspectRatio="none" style=""><g fill="#1a2070"><rect x="0" y="0.6" width="5.4" height="5.4" rx="0.8"/><rect x="0" y="9.8" width="5.4" height="5.4" rx="0.8"/><rect x="0" y="19" width="5.4" height="5.4" rx="0.8"/><rect x="9.4" y="1.6" width="20.6" height="3.4" rx="0.8"/><rect x="9.4" y="10.8" width="20.6" height="3.4" rx="0.8"/><rect x="9.4" y="20" width="20.6" height="3.4" rx="0.8"/></g></svg></div>
<div class="cb abs" style="left:2554px;top:570px"></div>
<div class="abs" style="left:486px;top:620.0px;width:2122px;height:74.25px;background:#f9f9f9"></div>
<div class="abs" style="left:486px;top:694.2px;width:2122px;height:2px;background:#e2e2e2"></div>
<div class="abs ref" style="left:502px;top:638.6px;height:34px;display:flex;align-items:center;line-height:34px"><span style="margin-top:-1.4px"><svg width="33" height="29.3" viewBox="0 0 33 29.3" preserveAspectRatio="none" style=""><path fill="#6a9a3b" d="M0 1.4 A1.4 1.4 0 0 1 1.4 0 H12.3 V7.7 a1.5 1.5 0 0 0 1.5 1.5 H21.8 V27.9 a1.4 1.4 0 0 1 -1.4 1.4 H1.4 A1.4 1.4 0 0 1 0 27.9 Z"/><path fill="#6a9a3b" d="M14.6 0.4 L21.7 7.1 H14.6 Z"/><path fill="#f9f9f9" stroke="#f9f9f9" stroke-width="4.2" stroke-linejoin="miter" d="M16.1 19.6 L25.3 10.8 L28.8 14.1 L20.3 23.1 H16.1 Z"/><path fill="#f9f9f9" d="M22 9 H34 V24 H22 Z"/><path fill="#6a9a3b" d="M16.1 19.6 L25.3 10.8 L28.8 14.1 L20.3 23.1 H16.1 Z"/><path fill="#6a9a3b" d="M26.8 9.1 L28.9 7.2 a1.2 1.2 0 0 1 1.6 0 L32.7 9.4 a1.2 1.2 0 0 1 0 1.6 L30.6 13 Z"/><path fill="none" stroke="#f9f9f9" stroke-width="1.9" stroke-linejoin="round" stroke-linecap="butt" d="M3.4 24.5 H5.7 L7.9 19.9 L10.1 24.5 L11.7 22.6 L13.6 24.4 H21.9"/></svg></span><span style="margin-left:7.3px">PR2202-0015</span><span style="margin-left:9.8px;margin-top:-0.6px"><svg width="30" height="29" viewBox="0 0 30 29" preserveAspectRatio="none" style=""><path fill="#999" d="M12.2 0 H17.8 a1 1 0 0 1 1 1 V9.8 H23.4 c1 0 1.4 1 0.8 1.7 L15.8 20 a1.1 1.1 0 0 1 -1.6 0 L5.8 11.5 c-0.6 -0.7 -0.2 -1.7 0.8 -1.7 H11.2 V1 a1 1 0 0 1 1 -1 Z"/><path fill="#999" fill-rule="evenodd" d="M0 21 a1.4 1.4 0 0 1 1.4 -1.4 H9.6 L12.6 22.6 a3.4 3.4 0 0 0 4.8 0 L20.4 19.6 H28.6 a1.4 1.4 0 0 1 1.4 1.4 V27.6 a1.4 1.4 0 0 1 -1.4 1.4 H1.4 A1.4 1.4 0 0 1 0 27.6 Z M21.2 25.4 h1.8 v1.6 h-1.8 Z M24.6 25.4 h1.8 v1.6 h-1.8 Z"/></svg></span></div>
<div class="abs" style="left:853px;top:640.1px"><svg width="25.4" height="29.4" viewBox="0 0 25.4 29.4" preserveAspectRatio="none" style=""><path fill="#6c69a9" fill-rule="evenodd" d="M1.9 1 a1 1 0 0 1 1 -1 H22.5 a1 1 0 0 1 1 1 V27.7 H25.4 V29.4 H0 V27.7 H1.9 Z M6.9 3.5 H11.1 V7.7 H6.9 Z M14.4 3.5 H18.6 V7.7 H14.4 Z M6.9 9.1 H11.1 V13.1 H6.9 Z M14.4 9.1 H18.6 V13.1 H14.4 Z M6.9 14.6 H11.1 V18.6 H6.9 Z M14.4 14.6 H18.6 V18.6 H14.4 Z M10.8 21.7 H14.6 V27.8 H10.8 Z "/></svg></div>
<div class="abs ref" style="left:886px;top:638.6px;line-height:34px">Ste Prestalidaire</div>
<div class="abs" style="left:1251px;width:200px;text-align:center;top:638.6px;line-height:34px;color:#111">06/12/2021</div>
<div class="abs" style="left:1496px;width:200px;text-align:center;top:638.6px;line-height:34px;color:#111">21/12/2021</div>
<div class="abs" style="left:1502px;width:400px;text-align:right;top:638.6px;line-height:34px;color:#176a6a">520,00</div>
<div class="abs" style="left:1934.2px;top:638.0px"><svg width="40" height="40" viewBox="0 0 100 100" style="display:block"><use href="#avatar"/></svg></div>
<div class="abs ref" style="left:1981.5px;top:638.6px;line-height:34px">Renaud Franck</div>
<div class="abs" style="left:2052px;width:400px;text-align:right;top:633.6px"><span class="badge b4">Signée</span></div>
<div class="cb abs" style="left:2524px;top:640.1px"></div>
<div class="abs" style="left:486px;top:696.2px;width:2122px;height:74.15px;background:#fff"></div>
<div class="abs" style="left:486px;top:770.3px;width:2122px;height:2px;background:#e2e2e2"></div>
<div class="abs ref" style="left:502px;top:714.8px;height:34px;display:flex;align-items:center;line-height:34px"><span style="margin-top:-1.4px"><svg width="33" height="29.3" viewBox="0 0 33 29.3" preserveAspectRatio="none" style=""><path fill="#6a9a3b" d="M0 1.4 A1.4 1.4 0 0 1 1.4 0 H12.3 V7.7 a1.5 1.5 0 0 0 1.5 1.5 H21.8 V27.9 a1.4 1.4 0 0 1 -1.4 1.4 H1.4 A1.4 1.4 0 0 1 0 27.9 Z"/><path fill="#6a9a3b" d="M14.6 0.4 L21.7 7.1 H14.6 Z"/><path fill="#fff" stroke="#fff" stroke-width="4.2" stroke-linejoin="miter" d="M16.1 19.6 L25.3 10.8 L28.8 14.1 L20.3 23.1 H16.1 Z"/><path fill="#fff" d="M22 9 H34 V24 H22 Z"/><path fill="#6a9a3b" d="M16.1 19.6 L25.3 10.8 L28.8 14.1 L20.3 23.1 H16.1 Z"/><path fill="#6a9a3b" d="M26.8 9.1 L28.9 7.2 a1.2 1.2 0 0 1 1.6 0 L32.7 9.4 a1.2 1.2 0 0 1 0 1.6 L30.6 13 Z"/><path fill="none" stroke="#fff" stroke-width="1.9" stroke-linejoin="round" stroke-linecap="butt" d="M3.4 24.5 H5.7 L7.9 19.9 L10.1 24.5 L11.7 22.6 L13.6 24.4 H21.9"/></svg></span><span style="margin-left:7.3px">PR2202-0014</span><span style="margin-left:11.8px;margin-top:-1.6px"><svg width="33" height="29" viewBox="0 0 33 29" preserveAspectRatio="none" style=""><path fill="#bc9526" d="M14.2 1.4 a2.7 2.7 0 0 1 4.6 0 L32.4 24.8 a2.7 2.7 0 0 1 -2.3 4.1 H2.9 a2.7 2.7 0 0 1 -2.3 -4.1 Z"/><path fill="#fff" d="M14.1 9.6 H18.9 L18.3 18.8 H14.7 Z"/><circle fill="#fff" cx="16.5" cy="22.7" r="2.5"/></svg></span><span style="margin-left:10.8px;margin-top:-0.6px"><svg width="30" height="29" viewBox="0 0 30 29" preserveAspectRatio="none" style=""><path fill="#999" d="M12.2 0 H17.8 a1 1 0 0 1 1 1 V9.8 H23.4 c1 0 1.4 1 0.8 1.7 L15.8 20 a1.1 1.1 0 0 1 -1.6 0 L5.8 11.5 c-0.6 -0.7 -0.2 -1.7 0.8 -1.7 H11.2 V1 a1 1 0 0 1 1 -1 Z"/><path fill="#999" fill-rule="evenodd" d="M0 21 a1.4 1.4 0 0 1 1.4 -1.4 H9.6 L12.6 22.6 a3.4 3.4 0 0 0 4.8 0 L20.4 19.6 H28.6 a1.4 1.4 0 0 1 1.4 1.4 V27.6 a1.4 1.4 0 0 1 -1.4 1.4 H1.4 A1.4 1.4 0 0 1 0 27.6 Z M21.2 25.4 h1.8 v1.6 h-1.8 Z M24.6 25.4 h1.8 v1.6 h-1.8 Z"/></svg></span></div>
<div class="abs" style="left:853px;top:716.2px"><svg width="25.4" height="29.4" viewBox="0 0 25.4 29.4" preserveAspectRatio="none" style=""><path fill="#6c69a9" fill-rule="evenodd" d="M1.9 1 a1 1 0 0 1 1 -1 H22.5 a1 1 0 0 1 1 1 V27.7 H25.4 V29.4 H0 V27.7 H1.9 Z M6.9 3.5 H11.1 V7.7 H6.9 Z M14.4 3.5 H18.6 V7.7 H14.4 Z M6.9 9.1 H11.1 V13.1 H6.9 Z M14.4 9.1 H18.6 V13.1 H14.4 Z M6.9 14.6 H11.1 V18.6 H6.9 Z M14.4 14.6 H18.6 V18.6 H14.4 Z M10.8 21.7 H14.6 V27.8 H10.8 Z "/></svg></div>
<div class="abs ref" style="left:886px;top:714.8px;line-height:34px">Société Générale</div>
<div class="abs" style="left:1251px;width:200px;text-align:center;top:714.8px;line-height:34px;color:#111">04/12/2021</div>
<div class="abs" style="left:1496px;width:200px;text-align:center;top:714.8px;line-height:34px;color:#111">19/12/2021</div>
<div class="abs" style="left:1502px;width:400px;text-align:right;top:714.8px;line-height:34px;color:#176a6a">154,00</div>
<div class="abs" style="left:1934.2px;top:713.1px"><svg width="40" height="40" viewBox="0 0 100 100" style="display:block"><use href="#avatar"/></svg></div>
<div class="abs ref" style="left:1981.5px;top:712.9px;line-height:34px">Renaud Franck</div>
<div class="abs" style="left:2052px;width:400px;text-align:right;top:709.8px"><span class="badge b1">Validé (ouvert)</span></div>
<div class="cb abs" style="left:2524px;top:716.2px"></div>
<div class="abs" style="left:486px;top:772.3px;width:2122px;height:74.15px;background:#f9f9f9"></div>
<div class="abs" style="left:486px;top:846.4px;width:2122px;height:2px;background:#e2e2e2"></div>
<div class="abs ref" style="left:502px;top:790.8px;height:34px;display:flex;align-items:center;line-height:34px"><span style="margin-top:-1.4px"><svg width="33" height="29.3" viewBox="0 0 33 29.3" preserveAspectRatio="none" style=""><path fill="#6a9a3b" d="M0 1.4 A1.4 1.4 0 0 1 1.4 0 H12.3 V7.7 a1.5 1.5 0 0 0 1.5 1.5 H21.8 V27.9 a1.4 1.4 0 0 1 -1.4 1.4 H1.4 A1.4 1.4 0 0 1 0 27.9 Z"/><path fill="#6a9a3b" d="M14.6 0.4 L21.7 7.1 H14.6 Z"/><path fill="#f9f9f9" stroke="#f9f9f9" stroke-width="4.2" stroke-linejoin="miter" d="M16.1 19.6 L25.3 10.8 L28.8 14.1 L20.3 23.1 H16.1 Z"/><path fill="#f9f9f9" d="M22 9 H34 V24 H22 Z"/><path fill="#6a9a3b" d="M16.1 19.6 L25.3 10.8 L28.8 14.1 L20.3 23.1 H16.1 Z"/><path fill="#6a9a3b" d="M26.8 9.1 L28.9 7.2 a1.2 1.2 0 0 1 1.6 0 L32.7 9.4 a1.2 1.2 0 0 1 0 1.6 L30.6 13 Z"/><path fill="none" stroke="#f9f9f9" stroke-width="1.9" stroke-linejoin="round" stroke-linecap="butt" d="M3.4 24.5 H5.7 L7.9 19.9 L10.1 24.5 L11.7 22.6 L13.6 24.4 H21.9"/></svg></span><span style="margin-left:7.3px">PR2111-0013</span><span style="margin-left:9.8px;margin-top:-0.6px"><svg width="30" height="29" viewBox="0 0 30 29" preserveAspectRatio="none" style=""><path fill="#999" d="M12.2 0 H17.8 a1 1 0 0 1 1 1 V9.8 H23.4 c1 0 1.4 1 0.8 1.7 L15.8 20 a1.1 1.1 0 0 1 -1.6 0 L5.8 11.5 c-0.6 -0.7 -0.2 -1.7 0.8 -1.7 H11.2 V1 a1 1 0 0 1 1 -1 Z"/><path fill="#999" fill-rule="evenodd" d="M0 21 a1.4 1.4 0 0 1 1.4 -1.4 H9.6 L12.6 22.6 a3.4 3.4 0 0 0 4.8 0 L20.4 19.6 H28.6 a1.4 1.4 0 0 1 1.4 1.4 V27.6 a1.4 1.4 0 0 1 -1.4 1.4 H1.4 A1.4 1.4 0 0 1 0 27.6 Z M21.2 25.4 h1.8 v1.6 h-1.8 Z M24.6 25.4 h1.8 v1.6 h-1.8 Z"/></svg></span></div>
<div class="abs" style="left:853px;top:792.3px"><svg width="25.4" height="29.4" viewBox="0 0 25.4 29.4" preserveAspectRatio="none" style=""><path fill="#6c69a9" fill-rule="evenodd" d="M1.9 1 a1 1 0 0 1 1 -1 H22.5 a1 1 0 0 1 1 1 V27.7 H25.4 V29.4 H0 V27.7 H1.9 Z M6.9 3.5 H11.1 V7.7 H6.9 Z M14.4 3.5 H18.6 V7.7 H14.4 Z M6.9 9.1 H11.1 V13.1 H6.9 Z M14.4 9.1 H18.6 V13.1 H14.4 Z M6.9 14.6 H11.1 V18.6 H6.9 Z M14.4 14.6 H18.6 V18.6 H14.4 Z M10.8 21.7 H14.6 V27.8 H10.8 Z "/></svg></div>
<div class="abs ref" style="left:886px;top:790.8px;line-height:34px">Yann JARIDI</div>
<div class="abs" style="left:1251px;width:200px;text-align:center;top:790.8px;line-height:34px;color:#111">22/06/2021</div>
<div class="abs" style="left:1496px;width:200px;text-align:center;top:790.8px;line-height:34px;color:#111">07/07/2021</div>
<div class="abs" style="left:1502px;width:400px;text-align:right;top:790.8px;line-height:34px;color:#176a6a">850,00</div>
<div class="abs" style="left:1934.2px;top:789.2px"><svg width="40" height="40" viewBox="0 0 100 100" style="display:block"><use href="#avatar"/></svg></div>
<div class="abs ref" style="left:1981.5px;top:788.9px;line-height:34px">Renaud Franck</div>
<div class="abs" style="left:2052px;width:400px;text-align:right;top:785.8px"><span class="badge b0">Brouillon</span></div>
<div class="cb abs" style="left:2524px;top:792.3px"></div>
<div class="abs" style="left:486px;top:848.4px;width:2122px;height:74.05px;background:#fff"></div>
<div class="abs" style="left:486px;top:922.4px;width:2122px;height:2px;background:#e2e2e2"></div>
<div class="abs ref" style="left:502px;top:866.9px;height:34px;display:flex;align-items:center;line-height:34px"><span style="margin-top:-1.4px"><svg width="33" height="29.3" viewBox="0 0 33 29.3" preserveAspectRatio="none" style=""><path fill="#6a9a3b" d="M0 1.4 A1.4 1.4 0 0 1 1.4 0 H12.3 V7.7 a1.5 1.5 0 0 0 1.5 1.5 H21.8 V27.9 a1.4 1.4 0 0 1 -1.4 1.4 H1.4 A1.4 1.4 0 0 1 0 27.9 Z"/><path fill="#6a9a3b" d="M14.6 0.4 L21.7 7.1 H14.6 Z"/><path fill="#fff" stroke="#fff" stroke-width="4.2" stroke-linejoin="miter" d="M16.1 19.6 L25.3 10.8 L28.8 14.1 L20.3 23.1 H16.1 Z"/><path fill="#fff" d="M22 9 H34 V24 H22 Z"/><path fill="#6a9a3b" d="M16.1 19.6 L25.3 10.8 L28.8 14.1 L20.3 23.1 H16.1 Z"/><path fill="#6a9a3b" d="M26.8 9.1 L28.9 7.2 a1.2 1.2 0 0 1 1.6 0 L32.7 9.4 a1.2 1.2 0 0 1 0 1.6 L30.6 13 Z"/><path fill="none" stroke="#fff" stroke-width="1.9" stroke-linejoin="round" stroke-linecap="butt" d="M3.4 24.5 H5.7 L7.9 19.9 L10.1 24.5 L11.7 22.6 L13.6 24.4 H21.9"/></svg></span><span style="margin-left:7.3px">PR2108-0012</span><span style="margin-left:11.8px;margin-top:-1.6px"><svg width="33" height="29" viewBox="0 0 33 29" preserveAspectRatio="none" style=""><path fill="#bc9526" d="M14.2 1.4 a2.7 2.7 0 0 1 4.6 0 L32.4 24.8 a2.7 2.7 0 0 1 -2.3 4.1 H2.9 a2.7 2.7 0 0 1 -2.3 -4.1 Z"/><path fill="#fff" d="M14.1 9.6 H18.9 L18.3 18.8 H14.7 Z"/><circle fill="#fff" cx="16.5" cy="22.7" r="2.5"/></svg></span><span style="margin-left:10.8px;margin-top:-0.6px"><svg width="30" height="29" viewBox="0 0 30 29" preserveAspectRatio="none" style=""><path fill="#999" d="M12.2 0 H17.8 a1 1 0 0 1 1 1 V9.8 H23.4 c1 0 1.4 1 0.8 1.7 L15.8 20 a1.1 1.1 0 0 1 -1.6 0 L5.8 11.5 c-0.6 -0.7 -0.2 -1.7 0.8 -1.7 H11.2 V1 a1 1 0 0 1 1 -1 Z"/><path fill="#999" fill-rule="evenodd" d="M0 21 a1.4 1.4 0 0 1 1.4 -1.4 H9.6 L12.6 22.6 a3.4 3.4 0 0 0 4.8 0 L20.4 19.6 H28.6 a1.4 1.4 0 0 1 1.4 1.4 V27.6 a1.4 1.4 0 0 1 -1.4 1.4 H1.4 A1.4 1.4 0 0 1 0 27.6 Z M21.2 25.4 h1.8 v1.6 h-1.8 Z M24.6 25.4 h1.8 v1.6 h-1.8 Z"/></svg></span></div>
<div class="abs" style="left:853px;top:868.4px"><svg width="25.4" height="29.4" viewBox="0 0 25.4 29.4" preserveAspectRatio="none" style=""><path fill="#6c69a9" fill-rule="evenodd" d="M1.9 1 a1 1 0 0 1 1 -1 H22.5 a1 1 0 0 1 1 1 V27.7 H25.4 V29.4 H0 V27.7 H1.9 Z M6.9 3.5 H11.1 V7.7 H6.9 Z M14.4 3.5 H18.6 V7.7 H14.4 Z M6.9 9.1 H11.1 V13.1 H6.9 Z M14.4 9.1 H18.6 V13.1 H14.4 Z M6.9 14.6 H11.1 V18.6 H6.9 Z M14.4 14.6 H18.6 V18.6 H14.4 Z M10.8 21.7 H14.6 V27.8 H10.8 Z "/></svg></div>
<div class="abs ref" style="left:886px;top:866.9px;line-height:34px">Ste Prestalidaire</div>
<div class="abs" style="left:1251px;width:200px;text-align:center;top:866.9px;line-height:34px;color:#111">12/08/2021</div>
<div class="abs" style="left:1496px;width:200px;text-align:center;top:866.9px;line-height:34px;color:#111">27/08/2021</div>
<div class="abs" style="left:1502px;width:400px;text-align:right;top:866.9px;line-height:34px;color:#176a6a">950,00</div>
<div class="abs" style="left:1934.2px;top:865.3px"><svg width="40" height="40" viewBox="0 0 100 100" style="display:block"><use href="#avatar"/></svg></div>
<div class="abs ref" style="left:1981.5px;top:865.0px;line-height:34px">Renaud Franck</div>
<div class="abs" style="left:2052px;width:400px;text-align:right;top:861.9px"><span class="badge b1">Validé (ouvert)</span></div>
<div class="cb abs" style="left:2524px;top:868.4px"></div>
<div class="abs" style="left:486px;top:924.4px;width:2122px;height:74.15px;background:#f9f9f9"></div>
<div class="abs" style="left:486px;top:998.5px;width:2122px;height:2px;background:#e2e2e2"></div>
<div class="abs ref" style="left:502px;top:943.0px;height:34px;display:flex;align-items:center;line-height:34px"><span style="margin-top:-1.4px"><svg width="33" height="29.3" viewBox="0 0 33 29.3" preserveAspectRatio="none" style=""><path fill="#6a9a3b" d="M0 1.4 A1.4 1.4 0 0 1 1.4 0 H12.3 V7.7 a1.5 1.5 0 0 0 1.5 1.5 H21.8 V27.9 a1.4 1.4 0 0 1 -1.4 1.4 H1.4 A1.4 1.4 0 0 1 0 27.9 Z"/><path fill="#6a9a3b" d="M14.6 0.4 L21.7 7.1 H14.6 Z"/><path fill="#f9f9f9" stroke="#f9f9f9" stroke-width="4.2" stroke-linejoin="miter" d="M16.1 19.6 L25.3 10.8 L28.8 14.1 L20.3 23.1 H16.1 Z"/><path fill="#f9f9f9" d="M22 9 H34 V24 H22 Z"/><path fill="#6a9a3b" d="M16.1 19.6 L25.3 10.8 L28.8 14.1 L20.3 23.1 H16.1 Z"/><path fill="#6a9a3b" d="M26.8 9.1 L28.9 7.2 a1.2 1.2 0 0 1 1.6 0 L32.7 9.4 a1.2 1.2 0 0 1 0 1.6 L30.6 13 Z"/><path fill="none" stroke="#f9f9f9" stroke-width="1.9" stroke-linejoin="round" stroke-linecap="butt" d="M3.4 24.5 H5.7 L7.9 19.9 L10.1 24.5 L11.7 22.6 L13.6 24.4 H21.9"/></svg></span><span style="margin-left:7.3px">PR2008-0011</span><span style="margin-left:9.8px;margin-top:-0.6px"><svg width="30" height="29" viewBox="0 0 30 29" preserveAspectRatio="none" style=""><path fill="#999" d="M12.2 0 H17.8 a1 1 0 0 1 1 1 V9.8 H23.4 c1 0 1.4 1 0.8 1.7 L15.8 20 a1.1 1.1 0 0 1 -1.6 0 L5.8 11.5 c-0.6 -0.7 -0.2 -1.7 0.8 -1.7 H11.2 V1 a1 1 0 0 1 1 -1 Z"/><path fill="#999" fill-rule="evenodd" d="M0 21 a1.4 1.4 0 0 1 1.4 -1.4 H9.6 L12.6 22.6 a3.4 3.4 0 0 0 4.8 0 L20.4 19.6 H28.6 a1.4 1.4 0 0 1 1.4 1.4 V27.6 a1.4 1.4 0 0 1 -1.4 1.4 H1.4 A1.4 1.4 0 0 1 0 27.6 Z M21.2 25.4 h1.8 v1.6 h-1.8 Z M24.6 25.4 h1.8 v1.6 h-1.8 Z"/></svg></span></div>
<div class="abs" style="left:853px;top:944.5px"><svg width="25.4" height="29.4" viewBox="0 0 25.4 29.4" preserveAspectRatio="none" style=""><path fill="#6c69a9" fill-rule="evenodd" d="M1.9 1 a1 1 0 0 1 1 -1 H22.5 a1 1 0 0 1 1 1 V27.7 H25.4 V29.4 H0 V27.7 H1.9 Z M6.9 3.5 H11.1 V7.7 H6.9 Z M14.4 3.5 H18.6 V7.7 H14.4 Z M6.9 9.1 H11.1 V13.1 H6.9 Z M14.4 9.1 H18.6 V13.1 H14.4 Z M6.9 14.6 H11.1 V18.6 H6.9 Z M14.4 14.6 H18.6 V18.6 H14.4 Z M10.8 21.7 H14.6 V27.8 H10.8 Z "/></svg></div>
<div class="abs ref" style="left:886px;top:943.0px;line-height:34px">MC CONSULT</div>
<div class="abs" style="left:1251px;width:200px;text-align:center;top:943.0px;line-height:34px;color:#111">25/08/2020</div>
<div class="abs" style="left:1496px;width:200px;text-align:center;top:943.0px;line-height:34px;color:#111">09/09/2020</div>
<div class="abs" style="left:1502px;width:400px;text-align:right;top:943.0px;line-height:34px;color:#176a6a">620,00</div>
<div class="abs" style="left:1934.2px;top:941.4px"><svg width="40" height="40" viewBox="0 0 100 100" style="display:block"><use href="#avatar"/></svg></div>
<div class="abs ref" style="left:1981.5px;top:941.1px;line-height:34px">Renaud Franck</div>
<div class="abs" style="left:2052px;width:400px;text-align:right;top:938.0px"><span class="badge b4">Signée</span></div>
<div class="cb abs" style="left:2524px;top:944.5px"></div>
<div class="abs" style="left:486px;top:1000.5px;width:2122px;height:74.15px;background:#fff"></div>
<div class="abs" style="left:486px;top:1074.6px;width:2122px;height:2px;background:#e2e2e2"></div>
<div class="abs ref" style="left:502px;top:1019.0px;height:34px;display:flex;align-items:center;line-height:34px"><span style="margin-top:-1.4px"><svg width="33" height="29.3" viewBox="0 0 33 29.3" preserveAspectRatio="none" style=""><path fill="#6a9a3b" d="M0 1.4 A1.4 1.4 0 0 1 1.4 0 H12.3 V7.7 a1.5 1.5 0 0 0 1.5 1.5 H21.8 V27.9 a1.4 1.4 0 0 1 -1.4 1.4 H1.4 A1.4 1.4 0 0 1 0 27.9 Z"/><path fill="#6a9a3b" d="M14.6 0.4 L21.7 7.1 H14.6 Z"/><path fill="#fff" stroke="#fff" stroke-width="4.2" stroke-linejoin="miter" d="M16.1 19.6 L25.3 10.8 L28.8 14.1 L20.3 23.1 H16.1 Z"/><path fill="#fff" d="M22 9 H34 V24 H22 Z"/><path fill="#6a9a3b" d="M16.1 19.6 L25.3 10.8 L28.8 14.1 L20.3 23.1 H16.1 Z"/><path fill="#6a9a3b" d="M26.8 9.1 L28.9 7.2 a1.2 1.2 0 0 1 1.6 0 L32.7 9.4 a1.2 1.2 0 0 1 0 1.6 L30.6 13 Z"/><path fill="none" stroke="#fff" stroke-width="1.9" stroke-linejoin="round" stroke-linecap="butt" d="M3.4 24.5 H5.7 L7.9 19.9 L10.1 24.5 L11.7 22.6 L13.6 24.4 H21.9"/></svg></span><span style="margin-left:7.3px">PR2007-0010</span><span style="margin-left:9.8px;margin-top:-0.6px"><svg width="30" height="29" viewBox="0 0 30 29" preserveAspectRatio="none" style=""><path fill="#999" d="M12.2 0 H17.8 a1 1 0 0 1 1 1 V9.8 H23.4 c1 0 1.4 1 0.8 1.7 L15.8 20 a1.1 1.1 0 0 1 -1.6 0 L5.8 11.5 c-0.6 -0.7 -0.2 -1.7 0.8 -1.7 H11.2 V1 a1 1 0 0 1 1 -1 Z"/><path fill="#999" fill-rule="evenodd" d="M0 21 a1.4 1.4 0 0 1 1.4 -1.4 H9.6 L12.6 22.6 a3.4 3.4 0 0 0 4.8 0 L20.4 19.6 H28.6 a1.4 1.4 0 0 1 1.4 1.4 V27.6 a1.4 1.4 0 0 1 -1.4 1.4 H1.4 A1.4 1.4 0 0 1 0 27.6 Z M21.2 25.4 h1.8 v1.6 h-1.8 Z M24.6 25.4 h1.8 v1.6 h-1.8 Z"/></svg></span></div>
<div class="abs" style="left:853px;top:1020.5px"><svg width="25.4" height="29.4" viewBox="0 0 25.4 29.4" preserveAspectRatio="none" style=""><path fill="#6c69a9" fill-rule="evenodd" d="M1.9 1 a1 1 0 0 1 1 -1 H22.5 a1 1 0 0 1 1 1 V27.7 H25.4 V29.4 H0 V27.7 H1.9 Z M6.9 3.5 H11.1 V7.7 H6.9 Z M14.4 3.5 H18.6 V7.7 H14.4 Z M6.9 9.1 H11.1 V13.1 H6.9 Z M14.4 9.1 H18.6 V13.1 H14.4 Z M6.9 14.6 H11.1 V18.6 H6.9 Z M14.4 14.6 H18.6 V18.6 H14.4 Z M10.8 21.7 H14.6 V27.8 H10.8 Z "/></svg></div>
<div class="abs ref" style="left:886px;top:1019.0px;line-height:34px">Société Dream RT</div>
<div class="abs" style="left:1251px;width:200px;text-align:center;top:1019.0px;line-height:34px;color:#111">04/07/2020</div>
<div class="abs" style="left:1496px;width:200px;text-align:center;top:1019.0px;line-height:34px;color:#111">19/07/2020</div>
<div class="abs" style="left:1502px;width:400px;text-align:right;top:1019.0px;line-height:34px;color:#176a6a">1 808,00</div>
<div class="abs" style="left:1934.2px;top:1017.4px"><svg width="40" height="40" viewBox="0 0 100 100" style="display:block"><use href="#avatar"/></svg></div>
<div class="abs ref" style="left:1981.5px;top:1017.1px;line-height:34px">Renaud Franck</div>
<div class="abs" style="left:2052px;width:400px;text-align:right;top:1014.0px"><span class="badge b4">Signée</span></div>
<div class="cb abs" style="left:2524px;top:1020.5px"></div>
<div class="abs" style="left:486px;top:1076.6px;width:2122px;height:74.15px;background:#f9f9f9"></div>
<div class="abs" style="left:486px;top:1150.7px;width:2122px;height:2px;background:#e2e2e2"></div>
<div class="abs ref" style="left:502px;top:1092.6px;height:34px;display:flex;align-items:center;line-height:34px"><span style="margin-top:-1.4px"><svg width="33" height="29.3" viewBox="0 0 33 29.3" preserveAspectRatio="none" style=""><path fill="#6a9a3b" d="M0 1.4 A1.4 1.4 0 0 1 1.4 0 H12.3 V7.7 a1.5 1.5 0 0 0 1.5 1.5 H21.8 V27.9 a1.4 1.4 0 0 1 -1.4 1.4 H1.4 A1.4 1.4 0 0 1 0 27.9 Z"/><path fill="#6a9a3b" d="M14.6 0.4 L21.7 7.1 H14.6 Z"/><path fill="#f9f9f9" stroke="#f9f9f9" stroke-width="4.2" stroke-linejoin="miter" d="M16.1 19.6 L25.3 10.8 L28.8 14.1 L20.3 23.1 H16.1 Z"/><path fill="#f9f9f9" d="M22 9 H34 V24 H22 Z"/><path fill="#6a9a3b" d="M16.1 19.6 L25.3 10.8 L28.8 14.1 L20.3 23.1 H16.1 Z"/><path fill="#6a9a3b" d="M26.8 9.1 L28.9 7.2 a1.2 1.2 0 0 1 1.6 0 L32.7 9.4 a1.2 1.2 0 0 1 0 1.6 L30.6 13 Z"/><path fill="none" stroke="#f9f9f9" stroke-width="1.9" stroke-linejoin="round" stroke-linecap="butt" d="M3.4 24.5 H5.7 L7.9 19.9 L10.1 24.5 L11.7 22.6 L13.6 24.4 H21.9"/></svg></span><span style="margin-left:7.3px">PR2006-0009</span><span style="margin-left:11.8px;margin-top:-1.6px"><svg width="33" height="29" viewBox="0 0 33 29" preserveAspectRatio="none" style=""><path fill="#bc9526" d="M14.2 1.4 a2.7 2.7 0 0 1 4.6 0 L32.4 24.8 a2.7 2.7 0 0 1 -2.3 4.1 H2.9 a2.7 2.7 0 0 1 -2.3 -4.1 Z"/><path fill="#fff" d="M14.1 9.6 H18.9 L18.3 18.8 H14.7 Z"/><circle fill="#fff" cx="16.5" cy="22.7" r="2.5"/></svg></span><span style="margin-left:10.8px;margin-top:-0.6px"><svg width="30" height="29" viewBox="0 0 30 29" preserveAspectRatio="none" style=""><path fill="#999" d="M12.2 0 H17.8 a1 1 0 0 1 1 1 V9.8 H23.4 c1 0 1.4 1 0.8 1.7 L15.8 20 a1.1 1.1 0 0 1 -1.6 0 L5.8 11.5 c-0.6 -0.7 -0.2 -1.7 0.8 -1.7 H11.2 V1 a1 1 0 0 1 1 -1 Z"/><path fill="#999" fill-rule="evenodd" d="M0 21 a1.4 1.4 0 0 1 1.4 -1.4 H9.6 L12.6 22.6 a3.4 3.4 0 0 0 4.8 0 L20.4 19.6 H28.6 a1.4 1.4 0 0 1 1.4 1.4 V27.6 a1.4 1.4 0 0 1 -1.4 1.4 H1.4 A1.4 1.4 0 0 1 0 27.6 Z M21.2 25.4 h1.8 v1.6 h-1.8 Z M24.6 25.4 h1.8 v1.6 h-1.8 Z"/></svg></span></div>
<div class="abs" style="left:853px;top:1094.1px"><svg width="25.4" height="29.4" viewBox="0 0 25.4 29.4" preserveAspectRatio="none" style=""><path fill="#6c69a9" fill-rule="evenodd" d="M1.9 1 a1 1 0 0 1 1 -1 H22.5 a1 1 0 0 1 1 1 V27.7 H25.4 V29.4 H0 V27.7 H1.9 Z M6.9 3.5 H11.1 V7.7 H6.9 Z M14.4 3.5 H18.6 V7.7 H14.4 Z M6.9 9.1 H11.1 V13.1 H6.9 Z M14.4 9.1 H18.6 V13.1 H14.4 Z M6.9 14.6 H11.1 V18.6 H6.9 Z M14.4 14.6 H18.6 V18.6 H14.4 Z M10.8 21.7 H14.6 V27.8 H10.8 Z "/></svg></div>
<div class="abs ref" style="left:886px;top:1092.6px;line-height:34px">Société Gini Civil (Carlos)</div>
<div class="abs" style="left:1251px;width:200px;text-align:center;top:1092.6px;line-height:34px;color:#111">20/06/2020</div>
<div class="abs" style="left:1496px;width:200px;text-align:center;top:1092.6px;line-height:34px;color:#111">05/07/2020</div>
<div class="abs" style="left:1502px;width:400px;text-align:right;top:1092.6px;line-height:34px;color:#176a6a">7 500,00</div>
<div class="abs" style="left:1934.2px;top:1093.6px"><svg width="40" height="40" viewBox="0 0 100 100" style="display:block"><use href="#avatar"/></svg></div>
<div class="abs ref" style="left:1981.5px;top:1093.2px;line-height:34px">Renaud Franck</div>
<div class="abs" style="left:2052px;width:400px;text-align:right;top:1089.8px"><span class="badge b1">Validé (ouvert)</span></div>
<div class="cb abs" style="left:2524px;top:1094.1px"></div>
<div class="abs" style="left:486px;top:1152.7px;width:2122px;height:71.35px;background:#fff"></div>
<div class="abs" style="left:486px;top:1224.0px;width:2122px;height:2px;background:#e2e2e2"></div>
<div class="abs ref" style="left:502px;top:1169.0px;height:34px;display:flex;align-items:center;line-height:34px"><span style="margin-top:-1.4px"><svg width="33" height="29.3" viewBox="0 0 33 29.3" preserveAspectRatio="none" style=""><path fill="#6a9a3b" d="M0 1.4 A1.4 1.4 0 0 1 1.4 0 H12.3 V7.7 a1.5 1.5 0 0 0 1.5 1.5 H21.8 V27.9 a1.4 1.4 0 0 1 -1.4 1.4 H1.4 A1.4 1.4 0 0 1 0 27.9 Z"/><path fill="#6a9a3b" d="M14.6 0.4 L21.7 7.1 H14.6 Z"/><path fill="#fff" stroke="#fff" stroke-width="4.2" stroke-linejoin="miter" d="M16.1 19.6 L25.3 10.8 L28.8 14.1 L20.3 23.1 H16.1 Z"/><path fill="#fff" d="M22 9 H34 V24 H22 Z"/><path fill="#6a9a3b" d="M16.1 19.6 L25.3 10.8 L28.8 14.1 L20.3 23.1 H16.1 Z"/><path fill="#6a9a3b" d="M26.8 9.1 L28.9 7.2 a1.2 1.2 0 0 1 1.6 0 L32.7 9.4 a1.2 1.2 0 0 1 0 1.6 L30.6 13 Z"/><path fill="none" stroke="#fff" stroke-width="1.9" stroke-linejoin="round" stroke-linecap="butt" d="M3.4 24.5 H5.7 L7.9 19.9 L10.1 24.5 L11.7 22.6 L13.6 24.4 H21.9"/></svg></span><span style="margin-left:7.3px">PR2006-0008</span><span style="margin-left:9.8px;margin-top:-0.6px"><svg width="30" height="29" viewBox="0 0 30 29" preserveAspectRatio="none" style=""><path fill="#999" d="M12.2 0 H17.8 a1 1 0 0 1 1 1 V9.8 H23.4 c1 0 1.4 1 0.8 1.7 L15.8 20 a1.1 1.1 0 0 1 -1.6 0 L5.8 11.5 c-0.6 -0.7 -0.2 -1.7 0.8 -1.7 H11.2 V1 a1 1 0 0 1 1 -1 Z"/><path fill="#999" fill-rule="evenodd" d="M0 21 a1.4 1.4 0 0 1 1.4 -1.4 H9.6 L12.6 22.6 a3.4 3.4 0 0 0 4.8 0 L20.4 19.6 H28.6 a1.4 1.4 0 0 1 1.4 1.4 V27.6 a1.4 1.4 0 0 1 -1.4 1.4 H1.4 A1.4 1.4 0 0 1 0 27.6 Z M21.2 25.4 h1.8 v1.6 h-1.8 Z M24.6 25.4 h1.8 v1.6 h-1.8 Z"/></svg></span></div>
<div class="abs" style="left:853px;top:1170.5px"><svg width="25.4" height="29.4" viewBox="0 0 25.4 29.4" preserveAspectRatio="none" style=""><path fill="#6c69a9" fill-rule="evenodd" d="M1.9 1 a1 1 0 0 1 1 -1 H22.5 a1 1 0 0 1 1 1 V27.7 H25.4 V29.4 H0 V27.7 H1.9 Z M6.9 3.5 H11.1 V7.7 H6.9 Z M14.4 3.5 H18.6 V7.7 H14.4 Z M6.9 9.1 H11.1 V13.1 H6.9 Z M14.4 9.1 H18.6 V13.1 H14.4 Z M6.9 14.6 H11.1 V18.6 H6.9 Z M14.4 14.6 H18.6 V18.6 H14.4 Z M10.8 21.7 H14.6 V27.8 H10.8 Z "/></svg></div>
<div class="abs ref" style="left:886px;top:1169.0px;line-height:34px">Société Dream RT</div>
<div class="abs" style="left:1251px;width:200px;text-align:center;top:1169.0px;line-height:34px;color:#111">20/06/2020</div>
<div class="abs" style="left:1496px;width:200px;text-align:center;top:1169.0px;line-height:34px;color:#111">05/07/2020</div>
<div class="abs" style="left:1502px;width:400px;text-align:right;top:1169.0px;line-height:34px;color:#176a6a">1 716 300,00</div>
<div class="abs" style="left:1934.2px;top:1169.2px"><svg width="40" height="40" viewBox="0 0 100 100" style="display:block"><use href="#avatar"/></svg></div>
<div class="abs ref" style="left:1981.5px;top:1169.8px;line-height:34px">Renaud Franck</div>
<div class="abs" style="left:2052px;width:400px;text-align:right;top:1164.4px"><span class="badge b4">Signée</span></div>
<div class="cb abs" style="left:2524px;top:1170.5px"></div>
<div class="abs" style="left:486px;top:1226.0px;width:2122px;height:74.15px;background:#f9f9f9"></div>
<div class="abs" style="left:486px;top:1300.1px;width:2122px;height:2px;background:#e2e2e2"></div>
<div class="abs ref" style="left:502px;top:1244.5px;height:34px;display:flex;align-items:center;line-height:34px"><span style="margin-top:-1.4px"><svg width="33" height="29.3" viewBox="0 0 33 29.3" preserveAspectRatio="none" style=""><path fill="#6a9a3b" d="M0 1.4 A1.4 1.4 0 0 1 1.4 0 H12.3 V7.7 a1.5 1.5 0 0 0 1.5 1.5 H21.8 V27.9 a1.4 1.4 0 0 1 -1.4 1.4 H1.4 A1.4 1.4 0 0 1 0 27.9 Z"/><path fill="#6a9a3b" d="M14.6 0.4 L21.7 7.1 H14.6 Z"/><path fill="#f9f9f9" stroke="#f9f9f9" stroke-width="4.2" stroke-linejoin="miter" d="M16.1 19.6 L25.3 10.8 L28.8 14.1 L20.3 23.1 H16.1 Z"/><path fill="#f9f9f9" d="M22 9 H34 V24 H22 Z"/><path fill="#6a9a3b" d="M16.1 19.6 L25.3 10.8 L28.8 14.1 L20.3 23.1 H16.1 Z"/><path fill="#6a9a3b" d="M26.8 9.1 L28.9 7.2 a1.2 1.2 0 0 1 1.6 0 L32.7 9.4 a1.2 1.2 0 0 1 0 1.6 L30.6 13 Z"/><path fill="none" stroke="#f9f9f9" stroke-width="1.9" stroke-linejoin="round" stroke-linecap="butt" d="M3.4 24.5 H5.7 L7.9 19.9 L10.1 24.5 L11.7 22.6 L13.6 24.4 H21.9"/></svg></span><span style="margin-left:7.3px">PR2006-0007</span><span style="margin-left:9.8px;margin-top:-0.6px"><svg width="30" height="29" viewBox="0 0 30 29" preserveAspectRatio="none" style=""><path fill="#999" d="M12.2 0 H17.8 a1 1 0 0 1 1 1 V9.8 H23.4 c1 0 1.4 1 0.8 1.7 L15.8 20 a1.1 1.1 0 0 1 -1.6 0 L5.8 11.5 c-0.6 -0.7 -0.2 -1.7 0.8 -1.7 H11.2 V1 a1 1 0 0 1 1 -1 Z"/><path fill="#999" fill-rule="evenodd" d="M0 21 a1.4 1.4 0 0 1 1.4 -1.4 H9.6 L12.6 22.6 a3.4 3.4 0 0 0 4.8 0 L20.4 19.6 H28.6 a1.4 1.4 0 0 1 1.4 1.4 V27.6 a1.4 1.4 0 0 1 -1.4 1.4 H1.4 A1.4 1.4 0 0 1 0 27.6 Z M21.2 25.4 h1.8 v1.6 h-1.8 Z M24.6 25.4 h1.8 v1.6 h-1.8 Z"/></svg></span></div>
<div class="abs" style="left:853px;top:1246.0px"><svg width="25.4" height="29.4" viewBox="0 0 25.4 29.4" preserveAspectRatio="none" style=""><path fill="#6c69a9" fill-rule="evenodd" d="M1.9 1 a1 1 0 0 1 1 -1 H22.5 a1 1 0 0 1 1 1 V27.7 H25.4 V29.4 H0 V27.7 H1.9 Z M6.9 3.5 H11.1 V7.7 H6.9 Z M14.4 3.5 H18.6 V7.7 H14.4 Z M6.9 9.1 H11.1 V13.1 H6.9 Z M14.4 9.1 H18.6 V13.1 H14.4 Z M6.9 14.6 H11.1 V18.6 H6.9 Z M14.4 14.6 H18.6 V18.6 H14.4 Z M10.8 21.7 H14.6 V27.8 H10.8 Z "/></svg></div>
<div class="abs ref" style="left:886px;top:1244.5px;line-height:34px">Société Dream RT</div>
<div class="abs" style="left:1251px;width:200px;text-align:center;top:1244.5px;line-height:34px;color:#111">19/06/2020</div>
<div class="abs" style="left:1496px;width:200px;text-align:center;top:1244.5px;line-height:34px;color:#111">04/07/2020</div>
<div class="abs" style="left:1502px;width:400px;text-align:right;top:1244.5px;line-height:34px;color:#176a6a">6 500,00</div>
<div class="abs" style="left:1934.2px;top:1244.0px"><svg width="40" height="40" viewBox="0 0 100 100" style="display:block"><use href="#avatar"/></svg></div>
<div class="abs ref" style="left:1981.5px;top:1244.5px;line-height:34px">Renaud Franck</div>
<div class="abs" style="left:2052px;width:400px;text-align:right;top:1239.5px"><span class="badge b4">Signée</span></div>
<div class="cb abs" style="left:2524px;top:1246.0px"></div>
<div class="abs" style="left:486px;top:1302.1px;width:2122px;height:74.15px;background:#fff"></div>
<div class="abs" style="left:486px;top:1376.2px;width:2122px;height:2px;background:#e2e2e2"></div>
<div class="abs ref" style="left:502px;top:1320.7px;height:34px;display:flex;align-items:center;line-height:34px"><span style="margin-top:-1.4px"><svg width="33" height="29.3" viewBox="0 0 33 29.3" preserveAspectRatio="none" style=""><path fill="#6a9a3b" d="M0 1.4 A1.4 1.4 0 0 1 1.4 0 H12.3 V7.7 a1.5 1.5 0 0 0 1.5 1.5 H21.8 V27.9 a1.4 1.4 0 0 1 -1.4 1.4 H1.4 A1.4 1.4 0 0 1 0 27.9 Z"/><path fill="#6a9a3b" d="M14.6 0.4 L21.7 7.1 H14.6 Z"/><path fill="#fff" stroke="#fff" stroke-width="4.2" stroke-linejoin="miter" d="M16.1 19.6 L25.3 10.8 L28.8 14.1 L20.3 23.1 H16.1 Z"/><path fill="#fff" d="M22 9 H34 V24 H22 Z"/><path fill="#6a9a3b" d="M16.1 19.6 L25.3 10.8 L28.8 14.1 L20.3 23.1 H16.1 Z"/><path fill="#6a9a3b" d="M26.8 9.1 L28.9 7.2 a1.2 1.2 0 0 1 1.6 0 L32.7 9.4 a1.2 1.2 0 0 1 0 1.6 L30.6 13 Z"/><path fill="none" stroke="#fff" stroke-width="1.9" stroke-linejoin="round" stroke-linecap="butt" d="M3.4 24.5 H5.7 L7.9 19.9 L10.1 24.5 L11.7 22.6 L13.6 24.4 H21.9"/></svg></span><span style="margin-left:7.3px">PR2006-0006</span><span style="margin-left:11.8px;margin-top:-1.6px"><svg width="33" height="29" viewBox="0 0 33 29" preserveAspectRatio="none" style=""><path fill="#bc9526" d="M14.2 1.4 a2.7 2.7 0 0 1 4.6 0 L32.4 24.8 a2.7 2.7 0 0 1 -2.3 4.1 H2.9 a2.7 2.7 0 0 1 -2.3 -4.1 Z"/><path fill="#fff" d="M14.1 9.6 H18.9 L18.3 18.8 H14.7 Z"/><circle fill="#fff" cx="16.5" cy="22.7" r="2.5"/></svg></span><span style="margin-left:10.8px;margin-top:-0.6px"><svg width="30" height="29" viewBox="0 0 30 29" preserveAspectRatio="none" style=""><path fill="#999" d="M12.2 0 H17.8 a1 1 0 0 1 1 1 V9.8 H23.4 c1 0 1.4 1 0.8 1.7 L15.8 20 a1.1 1.1 0 0 1 -1.6 0 L5.8 11.5 c-0.6 -0.7 -0.2 -1.7 0.8 -1.7 H11.2 V1 a1 1 0 0 1 1 -1 Z"/><path fill="#999" fill-rule="evenodd" d="M0 21 a1.4 1.4 0 0 1 1.4 -1.4 H9.6 L12.6 22.6 a3.4 3.4 0 0 0 4.8 0 L20.4 19.6 H28.6 a1.4 1.4 0 0 1 1.4 1.4 V27.6 a1.4 1.4 0 0 1 -1.4 1.4 H1.4 A1.4 1.4 0 0 1 0 27.6 Z M21.2 25.4 h1.8 v1.6 h-1.8 Z M24.6 25.4 h1.8 v1.6 h-1.8 Z"/></svg></span></div>
<div class="abs" style="left:853px;top:1322.2px"><svg width="25.4" height="29.4" viewBox="0 0 25.4 29.4" preserveAspectRatio="none" style=""><path fill="#6c69a9" fill-rule="evenodd" d="M1.9 1 a1 1 0 0 1 1 -1 H22.5 a1 1 0 0 1 1 1 V27.7 H25.4 V29.4 H0 V27.7 H1.9 Z M6.9 3.5 H11.1 V7.7 H6.9 Z M14.4 3.5 H18.6 V7.7 H14.4 Z M6.9 9.1 H11.1 V13.1 H6.9 Z M14.4 9.1 H18.6 V13.1 H14.4 Z M6.9 14.6 H11.1 V18.6 H6.9 Z M14.4 14.6 H18.6 V18.6 H14.4 Z M10.8 21.7 H14.6 V27.8 H10.8 Z "/></svg></div>
<div class="abs ref" style="left:886px;top:1320.7px;line-height:34px">Société TEM</div>
<div class="abs" style="left:1251px;width:200px;text-align:center;top:1320.7px;line-height:34px;color:#111">19/06/2020</div>
<div class="abs" style="left:1496px;width:200px;text-align:center;top:1320.7px;line-height:34px;color:#111">04/07/2020</div>
<div class="abs" style="left:1502px;width:400px;text-align:right;top:1320.7px;line-height:34px;color:#176a6a">20 500,00</div>
<div class="abs" style="left:1934.2px;top:1319.1px"><svg width="40" height="40" viewBox="0 0 100 100" style="display:block"><use href="#avatar"/></svg></div>
<div class="abs ref" style="left:1981.5px;top:1318.8px;line-height:34px">Renaud Franck</div>
<div class="abs" style="left:2052px;width:400px;text-align:right;top:1315.7px"><span class="badge b1">Validé (ouvert)</span></div>
<div class="cb abs" style="left:2524px;top:1322.2px"></div>
<div class="abs" style="left:486px;top:1378.2px;width:2122px;height:74.15px;background:#f9f9f9"></div>
<div class="abs" style="left:486px;top:1452.3px;width:2122px;height:2px;background:#e2e2e2"></div>
<div class="abs ref" style="left:502px;top:1396.8px;height:34px;display:flex;align-items:center;line-height:34px"><span style="margin-top:-1.4px"><svg width="33" height="29.3" viewBox="0 0 33 29.3" preserveAspectRatio="none" style=""><path fill="#6a9a3b" d="M0 1.4 A1.4 1.4 0 0 1 1.4 0 H12.3 V7.7 a1.5 1.5 0 0 0 1.5 1.5 H21.8 V27.9 a1.4 1.4 0 0 1 -1.4 1.4 H1.4 A1.4 1.4 0 0 1 0 27.9 Z"/><path fill="#6a9a3b" d="M14.6 0.4 L21.7 7.1 H14.6 Z"/><path fill="#f9f9f9" stroke="#f9f9f9" stroke-width="4.2" stroke-linejoin="miter" d="M16.1 19.6 L25.3 10.8 L28.8 14.1 L20.3 23.1 H16.1 Z"/><path fill="#f9f9f9" d="M22 9 H34 V24 H22 Z"/><path fill="#6a9a3b" d="M16.1 19.6 L25.3 10.8 L28.8 14.1 L20.3 23.1 H16.1 Z"/><path fill="#6a9a3b" d="M26.8 9.1 L28.9 7.2 a1.2 1.2 0 0 1 1.6 0 L32.7 9.4 a1.2 1.2 0 0 1 0 1.6 L30.6 13 Z"/><path fill="none" stroke="#f9f9f9" stroke-width="1.9" stroke-linejoin="round" stroke-linecap="butt" d="M3.4 24.5 H5.7 L7.9 19.9 L10.1 24.5 L11.7 22.6 L13.6 24.4 H21.9"/></svg></span><span style="margin-left:7.3px">PR2006-0005</span><span style="margin-left:9.8px;margin-top:-0.6px"><svg width="30" height="29" viewBox="0 0 30 29" preserveAspectRatio="none" style=""><path fill="#999" d="M12.2 0 H17.8 a1 1 0 0 1 1 1 V9.8 H23.4 c1 0 1.4 1 0.8 1.7 L15.8 20 a1.1 1.1 0 0 1 -1.6 0 L5.8 11.5 c-0.6 -0.7 -0.2 -1.7 0.8 -1.7 H11.2 V1 a1 1 0 0 1 1 -1 Z"/><path fill="#999" fill-rule="evenodd" d="M0 21 a1.4 1.4 0 0 1 1.4 -1.4 H9.6 L12.6 22.6 a3.4 3.4 0 0 0 4.8 0 L20.4 19.6 H28.6 a1.4 1.4 0 0 1 1.4 1.4 V27.6 a1.4 1.4 0 0 1 -1.4 1.4 H1.4 A1.4 1.4 0 0 1 0 27.6 Z M21.2 25.4 h1.8 v1.6 h-1.8 Z M24.6 25.4 h1.8 v1.6 h-1.8 Z"/></svg></span></div>
<div class="abs" style="left:853px;top:1398.2px"><svg width="25.4" height="29.4" viewBox="0 0 25.4 29.4" preserveAspectRatio="none" style=""><path fill="#6c69a9" fill-rule="evenodd" d="M1.9 1 a1 1 0 0 1 1 -1 H22.5 a1 1 0 0 1 1 1 V27.7 H25.4 V29.4 H0 V27.7 H1.9 Z M6.9 3.5 H11.1 V7.7 H6.9 Z M14.4 3.5 H18.6 V7.7 H14.4 Z M6.9 9.1 H11.1 V13.1 H6.9 Z M14.4 9.1 H18.6 V13.1 H14.4 Z M6.9 14.6 H11.1 V18.6 H6.9 Z M14.4 14.6 H18.6 V18.6 H14.4 Z M10.8 21.7 H14.6 V27.8 H10.8 Z "/></svg></div>
<div class="abs ref" style="left:886px;top:1396.8px;line-height:34px">Société Générale</div>
<div class="abs" style="left:1251px;width:200px;text-align:center;top:1396.8px;line-height:34px;color:#111">19/06/2020</div>
<div class="abs" style="left:1496px;width:200px;text-align:center;top:1396.8px;line-height:34px;color:#111">04/07/2020</div>
<div class="abs" style="left:1502px;width:400px;text-align:right;top:1396.8px;line-height:34px;color:#176a6a">963,00</div>
<div class="abs" style="left:1934.2px;top:1395.2px"><svg width="40" height="40" viewBox="0 0 100 100" style="display:block"><use href="#avatar"/></svg></div>
<div class="abs ref" style="left:1981.5px;top:1394.8px;line-height:34px">Renaud Franck</div>
<div class="abs" style="left:2052px;width:400px;text-align:right;top:1391.8px"><span class="badge b0">Brouillon</span></div>
<div class="cb abs" style="left:2524px;top:1398.2px"></div>
<div class="abs" style="left:486px;top:1454.3px;width:2122px;height:74.15px;background:#fff"></div>
<div class="abs" style="left:486px;top:1528.4px;width:2122px;height:2px;background:#e2e2e2"></div>
<div class="abs ref" style="left:502px;top:1472.8px;height:34px;display:flex;align-items:center;line-height:34px"><span style="margin-top:-1.4px"><svg width="33" height="29.3" viewBox="0 0 33 29.3" preserveAspectRatio="none" style=""><path fill="#6a9a3b" d="M0 1.4 A1.4 1.4 0 0 1 1.4 0 H12.3 V7.7 a1.5 1.5 0 0 0 1.5 1.5 H21.8 V27.9 a1.4 1.4 0 0 1 -1.4 1.4 H1.4 A1.4 1.4 0 0 1 0 27.9 Z"/><path fill="#6a9a3b" d="M14.6 0.4 L21.7 7.1 H14.6 Z"/><path fill="#fff" stroke="#fff" stroke-width="4.2" stroke-linejoin="miter" d="M16.1 19.6 L25.3 10.8 L28.8 14.1 L20.3 23.1 H16.1 Z"/><path fill="#fff" d="M22 9 H34 V24 H22 Z"/><path fill="#6a9a3b" d="M16.1 19.6 L25.3 10.8 L28.8 14.1 L20.3 23.1 H16.1 Z"/><path fill="#6a9a3b" d="M26.8 9.1 L28.9 7.2 a1.2 1.2 0 0 1 1.6 0 L32.7 9.4 a1.2 1.2 0 0 1 0 1.6 L30.6 13 Z"/><path fill="none" stroke="#fff" stroke-width="1.9" stroke-linejoin="round" stroke-linecap="butt" d="M3.4 24.5 H5.7 L7.9 19.9 L10.1 24.5 L11.7 22.6 L13.6 24.4 H21.9"/></svg></span><span style="margin-left:7.3px">PR2006-0004</span><span style="margin-left:11.8px;margin-top:-1.6px"><svg width="33" height="29" viewBox="0 0 33 29" preserveAspectRatio="none" style=""><path fill="#bc9526" d="M14.2 1.4 a2.7 2.7 0 0 1 4.6 0 L32.4 24.8 a2.7 2.7 0 0 1 -2.3 4.1 H2.9 a2.7 2.7 0 0 1 -2.3 -4.1 Z"/><path fill="#fff" d="M14.1 9.6 H18.9 L18.3 18.8 H14.7 Z"/><circle fill="#fff" cx="16.5" cy="22.7" r="2.5"/></svg></span><span style="margin-left:10.8px;margin-top:-0.6px"><svg width="30" height="29" viewBox="0 0 30 29" preserveAspectRatio="none" style=""><path fill="#999" d="M12.2 0 H17.8 a1 1 0 0 1 1 1 V9.8 H23.4 c1 0 1.4 1 0.8 1.7 L15.8 20 a1.1 1.1 0 0 1 -1.6 0 L5.8 11.5 c-0.6 -0.7 -0.2 -1.7 0.8 -1.7 H11.2 V1 a1 1 0 0 1 1 -1 Z"/><path fill="#999" fill-rule="evenodd" d="M0 21 a1.4 1.4 0 0 1 1.4 -1.4 H9.6 L12.6 22.6 a3.4 3.4 0 0 0 4.8 0 L20.4 19.6 H28.6 a1.4 1.4 0 0 1 1.4 1.4 V27.6 a1.4 1.4 0 0 1 -1.4 1.4 H1.4 A1.4 1.4 0 0 1 0 27.6 Z M21.2 25.4 h1.8 v1.6 h-1.8 Z M24.6 25.4 h1.8 v1.6 h-1.8 Z"/></svg></span></div>
<div class="abs" style="left:853px;top:1474.3px"><svg width="25.4" height="29.4" viewBox="0 0 25.4 29.4" preserveAspectRatio="none" style=""><path fill="#6c69a9" fill-rule="evenodd" d="M1.9 1 a1 1 0 0 1 1 -1 H22.5 a1 1 0 0 1 1 1 V27.7 H25.4 V29.4 H0 V27.7 H1.9 Z M6.9 3.5 H11.1 V7.7 H6.9 Z M14.4 3.5 H18.6 V7.7 H14.4 Z M6.9 9.1 H11.1 V13.1 H6.9 Z M14.4 9.1 H18.6 V13.1 H14.4 Z M6.9 14.6 H11.1 V18.6 H6.9 Z M14.4 14.6 H18.6 V18.6 H14.4 Z M10.8 21.7 H14.6 V27.8 H10.8 Z "/></svg></div>
<div class="abs ref" style="left:886px;top:1472.8px;line-height:34px">Sté Travaux public</div>
<div class="abs" style="left:1251px;width:200px;text-align:center;top:1472.8px;line-height:34px;color:#111">19/06/2020</div>
<div class="abs" style="left:1496px;width:200px;text-align:center;top:1472.8px;line-height:34px;color:#111">04/07/2020</div>
<div class="abs" style="left:1502px;width:400px;text-align:right;top:1472.8px;line-height:34px;color:#176a6a">580,00</div>
<div class="abs" style="left:1934.2px;top:1471.2px"><svg width="40" height="40" viewBox="0 0 100 100" style="display:block"><use href="#avatar"/></svg></div>
<div class="abs ref" style="left:1981.5px;top:1470.9px;line-height:34px">Renaud Franck</div>
<div class="abs" style="left:2052px;width:400px;text-align:right;top:1467.8px"><span class="badge b1">Validé (ouvert)</span></div>
<div class="cb abs" style="left:2524px;top:1474.3px"></div>
<div class="abs" style="left:486px;top:1530.4px;width:2122px;height:73.85px;background:#f9f9f9"></div>
<div class="abs" style="left:486px;top:1604.2px;width:2122px;height:2px;background:#e2e2e2"></div>
<div class="abs ref" style="left:502px;top:1548.8px;height:34px;display:flex;align-items:center;line-height:34px"><span style="margin-top:-1.4px"><svg width="33" height="29.3" viewBox="0 0 33 29.3" preserveAspectRatio="none" style=""><path fill="#6a9a3b" d="M0 1.4 A1.4 1.4 0 0 1 1.4 0 H12.3 V7.7 a1.5 1.5 0 0 0 1.5 1.5 H21.8 V27.9 a1.4 1.4 0 0 1 -1.4 1.4 H1.4 A1.4 1.4 0 0 1 0 27.9 Z"/><path fill="#6a9a3b" d="M14.6 0.4 L21.7 7.1 H14.6 Z"/><path fill="#f9f9f9" stroke="#f9f9f9" stroke-width="4.2" stroke-linejoin="miter" d="M16.1 19.6 L25.3 10.8 L28.8 14.1 L20.3 23.1 H16.1 Z"/><path fill="#f9f9f9" d="M22 9 H34 V24 H22 Z"/><path fill="#6a9a3b" d="M16.1 19.6 L25.3 10.8 L28.8 14.1 L20.3 23.1 H16.1 Z"/><path fill="#6a9a3b" d="M26.8 9.1 L28.9 7.2 a1.2 1.2 0 0 1 1.6 0 L32.7 9.4 a1.2 1.2 0 0 1 0 1.6 L30.6 13 Z"/><path fill="none" stroke="#f9f9f9" stroke-width="1.9" stroke-linejoin="round" stroke-linecap="butt" d="M3.4 24.5 H5.7 L7.9 19.9 L10.1 24.5 L11.7 22.6 L13.6 24.4 H21.9"/></svg></span><span style="margin-left:7.3px">PR2006-0003</span><span style="margin-left:11.8px;margin-top:-1.6px"><svg width="33" height="29" viewBox="0 0 33 29" preserveAspectRatio="none" style=""><path fill="#bc9526" d="M14.2 1.4 a2.7 2.7 0 0 1 4.6 0 L32.4 24.8 a2.7 2.7 0 0 1 -2.3 4.1 H2.9 a2.7 2.7 0 0 1 -2.3 -4.1 Z"/><path fill="#fff" d="M14.1 9.6 H18.9 L18.3 18.8 H14.7 Z"/><circle fill="#fff" cx="16.5" cy="22.7" r="2.5"/></svg></span><span style="margin-left:10.8px;margin-top:-0.6px"><svg width="30" height="29" viewBox="0 0 30 29" preserveAspectRatio="none" style=""><path fill="#999" d="M12.2 0 H17.8 a1 1 0 0 1 1 1 V9.8 H23.4 c1 0 1.4 1 0.8 1.7 L15.8 20 a1.1 1.1 0 0 1 -1.6 0 L5.8 11.5 c-0.6 -0.7 -0.2 -1.7 0.8 -1.7 H11.2 V1 a1 1 0 0 1 1 -1 Z"/><path fill="#999" fill-rule="evenodd" d="M0 21 a1.4 1.4 0 0 1 1.4 -1.4 H9.6 L12.6 22.6 a3.4 3.4 0 0 0 4.8 0 L20.4 19.6 H28.6 a1.4 1.4 0 0 1 1.4 1.4 V27.6 a1.4 1.4 0 0 1 -1.4 1.4 H1.4 A1.4 1.4 0 0 1 0 27.6 Z M21.2 25.4 h1.8 v1.6 h-1.8 Z M24.6 25.4 h1.8 v1.6 h-1.8 Z"/></svg></span></div>
<div class="abs" style="left:853px;top:1550.3px"><svg width="25.4" height="29.4" viewBox="0 0 25.4 29.4" preserveAspectRatio="none" style=""><path fill="#6c69a9" fill-rule="evenodd" d="M1.9 1 a1 1 0 0 1 1 -1 H22.5 a1 1 0 0 1 1 1 V27.7 H25.4 V29.4 H0 V27.7 H1.9 Z M6.9 3.5 H11.1 V7.7 H6.9 Z M14.4 3.5 H18.6 V7.7 H14.4 Z M6.9 9.1 H11.1 V13.1 H6.9 Z M14.4 9.1 H18.6 V13.1 H14.4 Z M6.9 14.6 H11.1 V18.6 H6.9 Z M14.4 14.6 H18.6 V18.6 H14.4 Z M10.8 21.7 H14.6 V27.8 H10.8 Z "/></svg></div>
<div class="abs ref" style="left:886px;top:1548.8px;line-height:34px">Société Dream RT</div>
<div class="abs" style="left:1251px;width:200px;text-align:center;top:1548.8px;line-height:34px;color:#111">19/06/2020</div>
<div class="abs" style="left:1496px;width:200px;text-align:center;top:1548.8px;line-height:34px;color:#111">04/07/2020</div>
<div class="abs" style="left:1502px;width:400px;text-align:right;top:1548.8px;line-height:34px;color:#176a6a">45 000,00</div>
<div class="abs" style="left:1934.2px;top:1547.2px"><svg width="40" height="40" viewBox="0 0 100 100" style="display:block"><use href="#avatar"/></svg></div>
<div class="abs ref" style="left:1981.5px;top:1546.9px;line-height:34px">Renaud Franck</div>
<div class="abs" style="left:2052px;width:400px;text-align:right;top:1543.8px"><span class="badge b1">Validé (ouvert)</span></div>
<div class="cb abs" style="left:2524px;top:1550.3px"></div>
<div class="abs" style="left:486px;top:1606.2px;width:2122px;height:74.15px;background:#fff"></div>
<div class="abs" style="left:486px;top:1680.3px;width:2122px;height:2px;background:#e2e2e2"></div>
<div class="abs ref" style="left:502px;top:1624.8px;height:34px;display:flex;align-items:center;line-height:34px"><span style="margin-top:-1.4px"><svg width="33" height="29.3" viewBox="0 0 33 29.3" preserveAspectRatio="none" style=""><path fill="#6a9a3b" d="M0 1.4 A1.4 1.4 0 0 1 1.4 0 H12.3 V7.7 a1.5 1.5 0 0 0 1.5 1.5 H21.8 V27.9 a1.4 1.4 0 0 1 -1.4 1.4 H1.4 A1.4 1.4 0 0 1 0 27.9 Z"/><path fill="#6a9a3b" d="M14.6 0.4 L21.7 7.1 H14.6 Z"/><path fill="#fff" stroke="#fff" stroke-width="4.2" stroke-linejoin="miter" d="M16.1 19.6 L25.3 10.8 L28.8 14.1 L20.3 23.1 H16.1 Z"/><path fill="#fff" d="M22 9 H34 V24 H22 Z"/><path fill="#6a9a3b" d="M16.1 19.6 L25.3 10.8 L28.8 14.1 L20.3 23.1 H16.1 Z"/><path fill="#6a9a3b" d="M26.8 9.1 L28.9 7.2 a1.2 1.2 0 0 1 1.6 0 L32.7 9.4 a1.2 1.2 0 0 1 0 1.6 L30.6 13 Z"/><path fill="none" stroke="#fff" stroke-width="1.9" stroke-linejoin="round" stroke-linecap="butt" d="M3.4 24.5 H5.7 L7.9 19.9 L10.1 24.5 L11.7 22.6 L13.6 24.4 H21.9"/></svg></span><span style="margin-left:7.3px">PR2006-0002</span><span style="margin-left:9.8px;margin-top:-0.6px"><svg width="30" height="29" viewBox="0 0 30 29" preserveAspectRatio="none" style=""><path fill="#999" d="M12.2 0 H17.8 a1 1 0 0 1 1 1 V9.8 H23.4 c1 0 1.4 1 0.8 1.7 L15.8 20 a1.1 1.1 0 0 1 -1.6 0 L5.8 11.5 c-0.6 -0.7 -0.2 -1.7 0.8 -1.7 H11.2 V1 a1 1 0 0 1 1 -1 Z"/><path fill="#999" fill-rule="evenodd" d="M0 21 a1.4 1.4 0 0 1 1.4 -1.4 H9.6 L12.6 22.6 a3.4 3.4 0 0 0 4.8 0 L20.4 19.6 H28.6 a1.4 1.4 0 0 1 1.4 1.4 V27.6 a1.4 1.4 0 0 1 -1.4 1.4 H1.4 A1.4 1.4 0 0 1 0 27.6 Z M21.2 25.4 h1.8 v1.6 h-1.8 Z M24.6 25.4 h1.8 v1.6 h-1.8 Z"/></svg></span></div>
<div class="abs" style="left:853px;top:1626.2px"><svg width="25.4" height="29.4" viewBox="0 0 25.4 29.4" preserveAspectRatio="none" style=""><path fill="#6c69a9" fill-rule="evenodd" d="M1.9 1 a1 1 0 0 1 1 -1 H22.5 a1 1 0 0 1 1 1 V27.7 H25.4 V29.4 H0 V27.7 H1.9 Z M6.9 3.5 H11.1 V7.7 H6.9 Z M14.4 3.5 H18.6 V7.7 H14.4 Z M6.9 9.1 H11.1 V13.1 H6.9 Z M14.4 9.1 H18.6 V13.1 H14.4 Z M6.9 14.6 H11.1 V18.6 H6.9 Z M14.4 14.6 H18.6 V18.6 H14.4 Z M10.8 21.7 H14.6 V27.8 H10.8 Z "/></svg></div>
<div class="abs ref" style="left:886px;top:1624.8px;line-height:34px">Société Dream RT</div>
<div class="abs" style="left:1251px;width:200px;text-align:center;top:1624.8px;line-height:34px;color:#111">19/06/2020</div>
<div class="abs" style="left:1496px;width:200px;text-align:center;top:1624.8px;line-height:34px;color:#111">04/07/2020</div>
<div class="abs" style="left:1502px;width:400px;text-align:right;top:1624.8px;line-height:34px;color:#176a6a">2 000,00</div>
<div class="abs" style="left:1934.2px;top:1623.2px"><svg width="40" height="40" viewBox="0 0 100 100" style="display:block"><use href="#avatar"/></svg></div>
<div class="abs ref" style="left:1981.5px;top:1622.8px;line-height:34px">Renaud Franck</div>
<div class="abs" style="left:2052px;width:400px;text-align:right;top:1619.8px"><span class="badge b4">Signée</span></div>
<div class="cb abs" style="left:2524px;top:1626.2px"></div>
<div class="abs" style="left:486px;top:1682.3px;width:2122px;height:74.05px;background:#f9f9f9"></div>
<div class="abs" style="left:486px;top:1756.3px;width:2122px;height:2px;background:#e2e2e2"></div>
<div class="abs ref" style="left:502px;top:1699.2px;height:34px;display:flex;align-items:center;line-height:34px"><span style="margin-top:-1.4px"><svg width="33" height="29.3" viewBox="0 0 33 29.3" preserveAspectRatio="none" style=""><path fill="#6a9a3b" d="M0 1.4 A1.4 1.4 0 0 1 1.4 0 H12.3 V7.7 a1.5 1.5 0 0 0 1.5 1.5 H21.8 V27.9 a1.4 1.4 0 0 1 -1.4 1.4 H1.4 A1.4 1.4 0 0 1 0 27.9 Z"/><path fill="#6a9a3b" d="M14.6 0.4 L21.7 7.1 H14.6 Z"/><path fill="#f9f9f9" stroke="#f9f9f9" stroke-width="4.2" stroke-linejoin="miter" d="M16.1 19.6 L25.3 10.8 L28.8 14.1 L20.3 23.1 H16.1 Z"/><path fill="#f9f9f9" d="M22 9 H34 V24 H22 Z"/><path fill="#6a9a3b" d="M16.1 19.6 L25.3 10.8 L28.8 14.1 L20.3 23.1 H16.1 Z"/><path fill="#6a9a3b" d="M26.8 9.1 L28.9 7.2 a1.2 1.2 0 0 1 1.6 0 L32.7 9.4 a1.2 1.2 0 0 1 0 1.6 L30.6 13 Z"/><path fill="none" stroke="#f9f9f9" stroke-width="1.9" stroke-linejoin="round" stroke-linecap="butt" d="M3.4 24.5 H5.7 L7.9 19.9 L10.1 24.5 L11.7 22.6 L13.6 24.4 H21.9"/></svg></span><span style="margin-left:7.3px">PR2006-0001</span><span style="margin-left:9.8px;margin-top:-0.6px"><svg width="30" height="29" viewBox="0 0 30 29" preserveAspectRatio="none" style=""><path fill="#999" d="M12.2 0 H17.8 a1 1 0 0 1 1 1 V9.8 H23.4 c1 0 1.4 1 0.8 1.7 L15.8 20 a1.1 1.1 0 0 1 -1.6 0 L5.8 11.5 c-0.6 -0.7 -0.2 -1.7 0.8 -1.7 H11.2 V1 a1 1 0 0 1 1 -1 Z"/><path fill="#999" fill-rule="evenodd" d="M0 21 a1.4 1.4 0 0 1 1.4 -1.4 H9.6 L12.6 22.6 a3.4 3.4 0 0 0 4.8 0 L20.4 19.6 H28.6 a1.4 1.4 0 0 1 1.4 1.4 V27.6 a1.4 1.4 0 0 1 -1.4 1.4 H1.4 A1.4 1.4 0 0 1 0 27.6 Z M21.2 25.4 h1.8 v1.6 h-1.8 Z M24.6 25.4 h1.8 v1.6 h-1.8 Z"/></svg></span></div>
<div class="abs" style="left:853px;top:1700.7px"><svg width="25.4" height="29.4" viewBox="0 0 25.4 29.4" preserveAspectRatio="none" style=""><path fill="#6c69a9" fill-rule="evenodd" d="M1.9 1 a1 1 0 0 1 1 -1 H22.5 a1 1 0 0 1 1 1 V27.7 H25.4 V29.4 H0 V27.7 H1.9 Z M6.9 3.5 H11.1 V7.7 H6.9 Z M14.4 3.5 H18.6 V7.7 H14.4 Z M6.9 9.1 H11.1 V13.1 H6.9 Z M14.4 9.1 H18.6 V13.1 H14.4 Z M6.9 14.6 H11.1 V18.6 H6.9 Z M14.4 14.6 H18.6 V18.6 H14.4 Z M10.8 21.7 H14.6 V27.8 H10.8 Z "/></svg></div>
<div class="abs ref" style="left:886px;top:1699.2px;line-height:34px">Société TEM</div>
<div class="abs" style="left:1251px;width:200px;text-align:center;top:1699.2px;line-height:34px;color:#111">15/06/2020</div>
<div class="abs" style="left:1496px;width:200px;text-align:center;top:1699.2px;line-height:34px;color:#111">30/06/2020</div>
<div class="abs" style="left:1502px;width:400px;text-align:right;top:1699.2px;line-height:34px;color:#176a6a">11 600,00</div>
<div class="abs" style="left:1934.2px;top:1699.2px"><svg width="40" height="40" viewBox="0 0 100 100" style="display:block"><use href="#avatar"/></svg></div>
<div class="abs ref" style="left:1981.5px;top:1698.9px;line-height:34px">Renaud Franck</div>
<div class="abs" style="left:2052px;width:400px;text-align:right;top:1695.4px"><span class="badge b4">Signée</span></div>
<div class="cb abs" style="left:2524px;top:1700.7px"></div>
<div class="abs" style="left:502px;top:1775px;line-height:34px;color:#999">Total</div>
<div class="abs" style="left:575.5px;top:1780.5px"><svg width="24" height="24" viewBox="0 0 24 24" preserveAspectRatio="none" style=""><circle cx="12" cy="12" r="12" fill="#d4d4d4"/><g fill="#fff"><circle cx="12" cy="6.8" r="1.9"/><path d="M9.6 10.4 H13.6 V17 H15 V18.8 H9.4 V17 H10.8 V12.2 H9.6 Z"/></g></svg></div>
<div class="abs" style="left:1502px;width:400px;text-align:right;top:1775px;line-height:34px;color:#888">1 815 845,00</div>
<div class="abs" style="left:486px;top:1830px;width:2122px;height:2px;background:#dcdcdc"></div>
<div class="abs" style="left:471.5px;top:415px;width:290.5px;height:128px;border:10px solid #f00"></div>
<div class="abs" style="left:479px;top:979.4px;width:359px;height:115.4px;border:10px solid #f00"></div>
<div class="abs" style="left:2460px;top:422px;width:105.8px;height:105.8px;border:9px solid #f00;border-radius:50%"></div>
<svg class="abs" style="left:0;top:1560px" width="480" height="434" viewBox="0 1560 480 434"><circle cx="85" cy="1880.2" r="293.1" fill="#243b5a"/><path fill="#fff" d="M138.5 1695.8 H171.3 V1895.5 H218.9 V1923.4 H77.5 V1895.5 H138.5 V1732.1 L87 1760.2 L73.8 1740.8 Z"/></svg>
</body></html>
